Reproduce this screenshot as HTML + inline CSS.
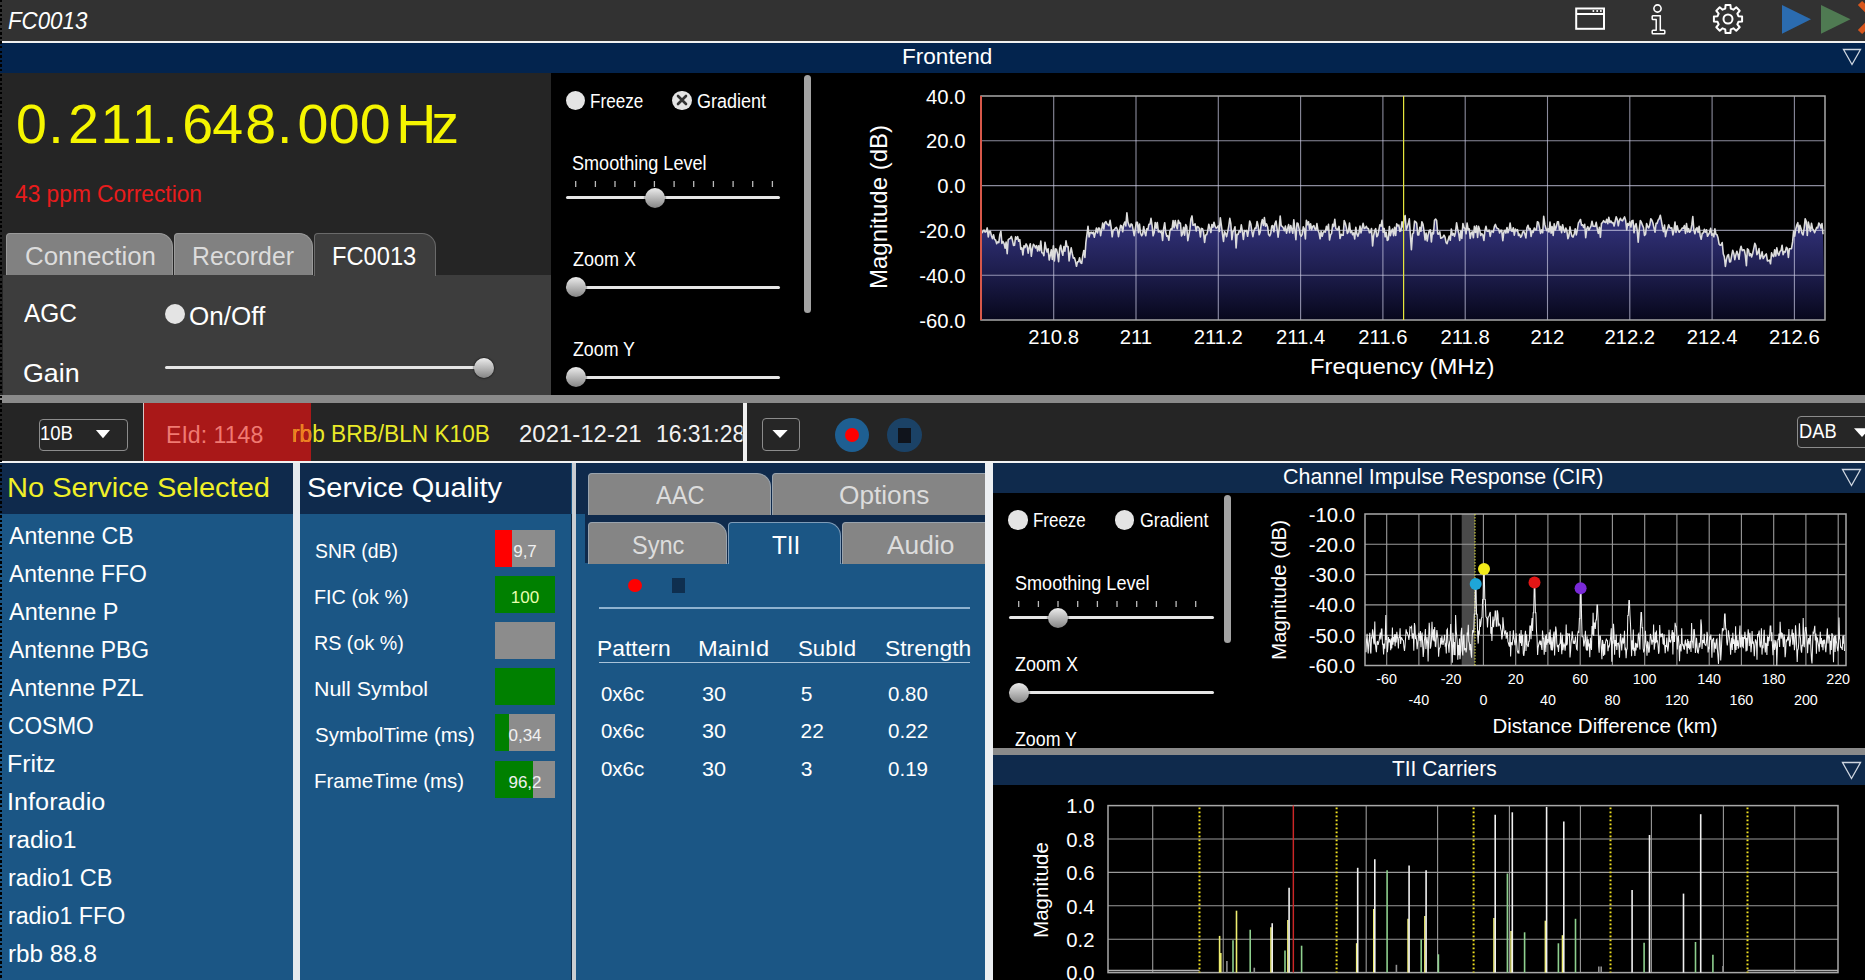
<!DOCTYPE html>
<html><head><meta charset="utf-8"><style>
html,body{margin:0;padding:0;width:1865px;height:980px;overflow:hidden;background:#000;}
body{position:relative;font-family:"Liberation Sans",sans-serif;}
.r{position:absolute;}
.t{position:absolute;white-space:nowrap;transform-origin:0 0;}
</style></head><body>
<div class="r" style="left:0px;top:0px;width:1865px;height:41px;background:#323232;"></div>
<div class="t" style="left:7.66px;top:8.88px;font-size:24px;line-height:24px;color:#fff;transform:scaleX(0.9286);font-style:italic;">FC0013</div>
<div class="r" style="left:0px;top:41px;width:1865px;height:2px;background:#f0f0f0;"></div>
<svg class="r" style="left:1560px;top:0px" width="305" height="41" viewBox="1560 0 305 41">
<rect x="1576.2" y="8.5" width="27.8" height="20.3" fill="none" stroke="#fff" stroke-width="2"/>
<line x1="1576" y1="14" x2="1604" y2="14" stroke="#fff" stroke-width="2"/>
<circle cx="1593.4" cy="11" r="1" fill="#fff"/><circle cx="1597.2" cy="11" r="1" fill="#fff"/><circle cx="1600.9" cy="11" r="1" fill="#fff"/>
<circle cx="1657.5" cy="8.5" r="3.6" fill="none" stroke="#fff" stroke-width="1.6"/>
<path d="M1652.8,15.8 H1660.3 V30.2 H1664 Q1664.8,30.2 1664.8,31 V33 Q1664.8,33.8 1664,33.8 H1653 Q1652.2,33.8 1652.2,33 V31 Q1652.2,30.2 1653,30.2 H1656.2 V19.6 H1653 Q1652.2,19.6 1652.2,18.8 V16.6 Q1652.2,15.8 1652.8,15.8 Z" fill="none" stroke="#fff" stroke-width="1.5" stroke-linejoin="round"/>
<polygon points="1738.44,16.22 1742.09,16.58 1742.09,21.42 1738.44,21.78 1737.34,24.42 1739.68,27.26 1736.26,30.68 1733.42,28.34 1730.78,29.44 1730.42,33.09 1725.58,33.09 1725.22,29.44 1722.58,28.34 1719.74,30.68 1716.32,27.26 1718.66,24.42 1717.56,21.78 1713.91,21.42 1713.91,16.58 1717.56,16.22 1718.66,13.58 1716.32,10.74 1719.74,7.32 1722.58,9.66 1725.22,8.56 1725.58,4.91 1730.42,4.91 1730.78,8.56 1733.42,9.66 1736.26,7.32 1739.68,10.74 1737.34,13.58" fill="none" stroke="#fff" stroke-width="2" stroke-linejoin="round"/><circle cx="1728" cy="19" r="4.5" fill="none" stroke="#fff" stroke-width="2"/>
<polygon points="1782,5 1811,19.3 1782,33.7" fill="#2b6cb0"/>
<polygon points="1821,5 1850.5,19.3 1821,33.7" fill="#4f7a52"/>
<path d="M1860 3 l8 8 M1860 32 l8 -8" stroke="#d8561c" stroke-width="6"/>
</svg>
<div class="r" style="left:0px;top:43px;width:1865px;height:30px;background:#03244e;"></div>
<div class="t" style="left:901.86px;top:46.48px;font-size:22px;line-height:22px;color:#fff;transform:scaleX(1.0252);">Frontend</div>
<svg class="r" style="left:1840px;top:46px" width="24" height="22"><polygon points="3.5,3.5 20.5,3.5 12,18.5" fill="none" stroke="#cfd6e0" stroke-width="1.3"/></svg>
<div class="r" style="left:0px;top:73px;width:1865px;height:322px;background:#000;"></div>
<div class="r" style="left:0px;top:73px;width:551px;height:322px;background:#252525;"></div>
<div class="t" style="left:15.88px;top:96.82px;font-size:55.5px;line-height:55.5px;color:#f5f500;">0</div>
<div class="t" style="left:48.30px;top:96.82px;font-size:55.5px;line-height:55.5px;color:#f5f500;">.</div>
<div class="t" style="left:68.12px;top:96.82px;font-size:55.5px;line-height:55.5px;color:#f5f500;">2</div>
<div class="t" style="left:100.54px;top:96.82px;font-size:55.5px;line-height:55.5px;color:#f5f500;">1</div>
<div class="t" style="left:131.64px;top:96.82px;font-size:55.5px;line-height:55.5px;color:#f5f500;">1</div>
<div class="t" style="left:162.31px;top:96.82px;font-size:55.5px;line-height:55.5px;color:#f5f500;">.</div>
<div class="t" style="left:182.22px;top:96.82px;font-size:55.5px;line-height:55.5px;color:#f5f500;">6</div>
<div class="t" style="left:212.15px;top:96.82px;font-size:55.5px;line-height:55.5px;color:#f5f500;">4</div>
<div class="t" style="left:245.34px;top:96.82px;font-size:55.5px;line-height:55.5px;color:#f5f500;">8</div>
<div class="t" style="left:276.90px;top:96.82px;font-size:55.5px;line-height:55.5px;color:#f5f500;">.</div>
<div class="t" style="left:297.58px;top:96.82px;font-size:55.5px;line-height:55.5px;color:#f5f500;">0</div>
<div class="t" style="left:328.68px;top:96.82px;font-size:55.5px;line-height:55.5px;color:#f5f500;">0</div>
<div class="t" style="left:359.78px;top:96.82px;font-size:55.5px;line-height:55.5px;color:#f5f500;">0</div>
<div class="t" style="left:396.22px;top:96.82px;font-size:55.5px;line-height:55.5px;color:#f5f500;">H</div>
<div class="t" style="left:431.28px;top:96.82px;font-size:55.5px;line-height:55.5px;color:#f5f500;">z</div>
<div class="t" style="left:15.49px;top:181.98px;font-size:24px;line-height:24px;color:#e81c1c;transform:scaleX(0.9470);">43 ppm Correction</div>
<div class="r" style="left:3px;top:275px;width:548px;height:120px;background:#3d3d3d;"></div>
<div class="r" style="left:6px;top:233px;width:166.5px;height:42px;background:#818181;border-radius:4px 14px 0 0;border:1px solid #9a9a9a;border-bottom:none;box-sizing:border-box;"></div>
<div class="r" style="left:174.2px;top:233px;width:139.0px;height:42px;background:#818181;border-radius:4px 14px 0 0;border:1px solid #9a9a9a;border-bottom:none;box-sizing:border-box;"></div>
<div class="r" style="left:314.4px;top:233px;width:121.20000000000005px;height:43px;background:#3d3d3d;border-radius:4px 14px 0 0;border:1px solid #6a6a6a;border-bottom:none;box-sizing:border-box;"></div>
<div class="t" style="left:24.51px;top:243.61px;font-size:25.5px;line-height:25.5px;color:#dcdcdc;transform:scaleX(1.0151);">Connection</div>
<div class="t" style="left:192.46px;top:243.61px;font-size:25.5px;line-height:25.5px;color:#dcdcdc;transform:scaleX(0.9718);">Recorder</div>
<div class="t" style="left:331.75px;top:243.61px;font-size:25.5px;line-height:25.5px;color:#fff;transform:scaleX(0.9288);">FC0013</div>
<div class="t" style="left:24.04px;top:301.01px;font-size:25.5px;line-height:25.5px;color:#fff;transform:scaleX(0.9585);">AGC</div>
<div class="r" style="left:165px;top:304px;width:20px;height:20px;border-radius:50%;background:#e4e4e4"></div>
<div class="t" style="left:189.36px;top:303.51px;font-size:25.5px;line-height:25.5px;color:#fff;transform:scaleX(1.0204);">On/Off</div>
<div class="t" style="left:22.76px;top:360.71px;font-size:25.5px;line-height:25.5px;color:#fff;transform:scaleX(1.0523);">Gain</div>
<div class="r" style="left:165px;top:366px;width:320px;height:3px;background:#e6e6e6;border-radius:2px;"></div>
<div class="r" style="left:474.0px;top:357.5px;width:20px;height:20px;border-radius:50%;background:linear-gradient(180deg,#ececec 0%,#b8b8b8 50%,#858585 100%);box-shadow:0 0 1.5px 0.5px rgba(0,0,0,0.6);"></div>
<div class="r" style="left:565.75px;top:90.65px;width:19.5px;height:19.5px;border-radius:50%;background:#e4e4e4"></div>
<div class="t" style="left:589.89px;top:90.97px;font-size:20px;line-height:20px;color:#fff;transform:scaleX(0.8543);">Freeze</div>
<div class="r" style="left:672.25px;top:90.65px;width:19.5px;height:19.5px;border-radius:50%;background:#e4e4e4"></div>
<svg class="r" style="left:672px;top:90.4px" width="20" height="20"><path d="M6 6 L14 14 M14 6 L6 14" stroke="#333" stroke-width="2.6" stroke-linecap="round"/></svg>
<div class="t" style="left:697.30px;top:90.97px;font-size:20px;line-height:20px;color:#fff;transform:scaleX(0.9001);">Gradient</div>
<div class="t" style="left:572.49px;top:152.77px;font-size:20px;line-height:20px;color:#fff;transform:scaleX(0.9029);">Smoothing Level</div>
<svg class="r" style="left:0;top:0" width="1865" height="980"><line x1="575.7" y1="181" x2="575.7" y2="187" stroke="#bbb" stroke-width="1.3"/><line x1="595.4" y1="181" x2="595.4" y2="187" stroke="#bbb" stroke-width="1.3"/><line x1="615.0" y1="181" x2="615.0" y2="187" stroke="#bbb" stroke-width="1.3"/><line x1="634.7" y1="181" x2="634.7" y2="187" stroke="#bbb" stroke-width="1.3"/><line x1="654.4" y1="181" x2="654.4" y2="187" stroke="#bbb" stroke-width="1.3"/><line x1="674.1" y1="181" x2="674.1" y2="187" stroke="#bbb" stroke-width="1.3"/><line x1="693.7" y1="181" x2="693.7" y2="187" stroke="#bbb" stroke-width="1.3"/><line x1="713.4" y1="181" x2="713.4" y2="187" stroke="#bbb" stroke-width="1.3"/><line x1="733.1" y1="181" x2="733.1" y2="187" stroke="#bbb" stroke-width="1.3"/><line x1="752.7" y1="181" x2="752.7" y2="187" stroke="#bbb" stroke-width="1.3"/><line x1="772.4" y1="181" x2="772.4" y2="187" stroke="#bbb" stroke-width="1.3"/></svg>
<div class="r" style="left:566px;top:196px;width:213.5px;height:3px;background:#e6e6e6;border-radius:2px;"></div>
<div class="r" style="left:644.5px;top:188.2px;width:20px;height:20px;border-radius:50%;background:linear-gradient(180deg,#ececec 0%,#b8b8b8 50%,#858585 100%);box-shadow:0 0 1.5px 0.5px rgba(0,0,0,0.6);"></div>
<div class="t" style="left:572.72px;top:248.77px;font-size:20px;line-height:20px;color:#fff;transform:scaleX(0.8992);">Zoom X</div>
<div class="r" style="left:566px;top:286px;width:213.5px;height:3px;background:#e6e6e6;border-radius:2px;"></div>
<div class="r" style="left:566.0px;top:277.2px;width:20px;height:20px;border-radius:50%;background:linear-gradient(180deg,#ececec 0%,#b8b8b8 50%,#858585 100%);box-shadow:0 0 1.5px 0.5px rgba(0,0,0,0.6);"></div>
<div class="t" style="left:572.72px;top:338.97px;font-size:20px;line-height:20px;color:#fff;transform:scaleX(0.8899);">Zoom Y</div>
<div class="r" style="left:566px;top:375.5px;width:213.5px;height:3px;background:#e6e6e6;border-radius:2px;"></div>
<div class="r" style="left:566.0px;top:366.7px;width:20px;height:20px;border-radius:50%;background:linear-gradient(180deg,#ececec 0%,#b8b8b8 50%,#858585 100%);box-shadow:0 0 1.5px 0.5px rgba(0,0,0,0.6);"></div>
<div class="r" style="left:803.6px;top:74.6px;width:7.6px;height:238px;background:#a3a3a3;border-radius:4px;"></div>
<svg class="r" style="left:0;top:0" width="1865" height="980"><defs><linearGradient id="sg" x1="0" y1="96" x2="0" y2="320" gradientUnits="userSpaceOnUse"><stop offset="0" stop-color="#3a3ab0"/><stop offset="0.6" stop-color="#2e2e72"/><stop offset="0.8" stop-color="#1c1c4a"/><stop offset="1" stop-color="#07071c"/></linearGradient></defs><path d="M981,320 L982.0,233.2 L983.0,231.1 L984.1,230.2 L985.1,232.2 L986.2,231.5 L987.2,227.9 L988.3,236.9 L989.3,231.5 L990.4,231.4 L991.4,235.8 L992.5,238.6 L993.5,234.7 L994.6,239.6 L995.6,240.0 L996.7,243.7 L997.7,241.9 L998.8,242.6 L999.8,234.8 L1000.9,231.3 L1001.9,243.4 L1003.0,241.5 L1004.0,243.4 L1005.1,248.1 L1006.1,242.1 L1007.2,253.6 L1008.2,239.8 L1009.3,238.7 L1010.3,238.4 L1011.4,236.5 L1012.4,240.1 L1013.5,245.4 L1014.5,245.3 L1015.6,236.9 L1016.6,239.1 L1017.7,236.7 L1018.7,241.3 L1019.8,239.6 L1020.8,249.2 L1021.9,247.8 L1022.9,255.0 L1024.0,245.7 L1025.0,247.6 L1026.1,243.9 L1027.1,245.8 L1028.2,253.1 L1029.2,247.4 L1030.3,243.8 L1031.3,256.3 L1032.4,248.6 L1033.4,244.4 L1034.5,245.5 L1035.5,248.0 L1036.6,245.7 L1037.6,251.0 L1038.7,245.9 L1039.7,250.7 L1040.8,241.0 L1041.8,252.8 L1042.9,253.0 L1043.9,255.6 L1045.0,242.3 L1046.0,248.1 L1047.1,252.0 L1048.1,248.8 L1049.2,260.0 L1050.2,255.9 L1051.3,249.9 L1052.3,259.4 L1053.4,245.7 L1054.4,260.9 L1055.5,248.9 L1056.5,249.2 L1057.6,254.4 L1058.6,261.6 L1059.7,248.4 L1060.7,245.3 L1061.8,251.5 L1062.8,255.3 L1063.9,246.6 L1064.9,251.2 L1066.0,240.9 L1067.0,246.6 L1068.1,246.6 L1069.1,260.9 L1070.2,253.1 L1071.2,247.8 L1072.3,253.7 L1073.3,258.1 L1074.4,257.7 L1075.4,261.1 L1076.5,266.3 L1077.5,261.8 L1078.6,261.8 L1079.6,257.8 L1080.7,262.9 L1081.7,263.4 L1082.8,255.4 L1083.8,250.5 L1084.9,257.4 L1085.9,242.4 L1087.0,234.1 L1088.0,226.4 L1089.1,236.9 L1090.1,232.8 L1091.2,232.2 L1092.2,233.6 L1093.3,232.2 L1094.3,237.2 L1095.4,232.5 L1096.4,228.1 L1097.5,232.9 L1098.5,228.1 L1099.6,228.2 L1100.6,235.6 L1101.7,229.3 L1102.7,223.1 L1103.8,229.0 L1104.8,222.7 L1105.9,221.6 L1106.9,223.9 L1108.0,224.7 L1109.0,225.6 L1110.1,220.4 L1111.1,227.2 L1112.2,236.8 L1113.2,230.0 L1114.3,229.8 L1115.3,228.2 L1116.4,227.3 L1117.4,229.5 L1118.5,236.7 L1119.5,230.9 L1120.6,225.4 L1121.6,226.0 L1122.7,231.8 L1123.7,224.8 L1124.8,222.1 L1125.8,225.9 L1126.9,212.8 L1127.9,222.0 L1129.0,225.3 L1130.0,227.0 L1131.1,223.9 L1132.1,224.6 L1133.2,230.2 L1134.2,235.7 L1135.3,228.8 L1136.3,222.3 L1137.4,222.4 L1138.4,232.7 L1139.5,224.1 L1140.5,233.0 L1141.6,235.7 L1142.6,234.3 L1143.7,226.6 L1144.7,232.6 L1145.8,235.7 L1146.8,228.7 L1147.9,229.5 L1148.9,224.3 L1150.0,224.2 L1151.0,218.4 L1152.1,225.8 L1153.1,235.8 L1154.2,232.5 L1155.2,222.5 L1156.3,228.2 L1157.3,222.5 L1158.4,232.0 L1159.4,230.9 L1160.5,232.5 L1161.5,231.2 L1162.6,240.4 L1163.6,228.8 L1164.7,222.7 L1165.7,232.2 L1166.8,236.2 L1167.8,235.8 L1168.9,240.2 L1169.9,231.2 L1171.0,228.9 L1172.0,229.2 L1173.1,220.5 L1174.1,227.8 L1175.2,220.5 L1176.2,225.4 L1177.3,228.8 L1178.3,220.3 L1179.4,223.1 L1180.4,223.0 L1181.5,236.0 L1182.5,233.8 L1183.6,227.2 L1184.6,235.2 L1185.7,224.6 L1186.7,226.5 L1187.8,240.7 L1188.8,235.3 L1189.9,229.4 L1190.9,219.0 L1192.0,215.9 L1193.0,225.3 L1194.1,225.0 L1195.1,223.9 L1196.2,231.0 L1197.2,226.6 L1198.3,227.0 L1199.3,228.4 L1200.4,237.0 L1201.4,228.4 L1202.5,228.7 L1203.5,232.2 L1204.6,242.5 L1205.6,235.1 L1206.7,234.8 L1207.7,231.1 L1208.8,224.2 L1209.8,228.4 L1210.9,232.5 L1211.9,224.5 L1213.0,227.2 L1214.0,222.2 L1215.1,226.5 L1216.1,228.2 L1217.2,227.4 L1218.2,225.8 L1219.3,231.5 L1220.3,217.7 L1221.4,225.5 L1222.4,233.3 L1223.5,241.4 L1224.5,231.6 L1225.6,233.6 L1226.6,236.7 L1227.7,231.6 L1228.7,226.5 L1229.8,218.3 L1230.8,223.7 L1231.9,239.6 L1232.9,231.8 L1234.0,230.1 L1235.0,226.7 L1236.1,247.9 L1237.1,234.3 L1238.2,234.4 L1239.2,230.7 L1240.3,232.1 L1241.3,224.9 L1242.4,231.6 L1243.4,239.4 L1244.5,230.6 L1245.5,231.2 L1246.6,230.5 L1247.6,236.3 L1248.7,229.9 L1249.7,221.1 L1250.8,224.1 L1251.8,231.1 L1252.9,236.7 L1253.9,231.3 L1255.0,228.1 L1256.0,228.4 L1257.1,221.5 L1258.1,225.6 L1259.2,234.8 L1260.2,232.0 L1261.3,223.8 L1262.3,219.6 L1263.4,225.4 L1264.4,217.5 L1265.5,226.1 L1266.5,223.9 L1267.6,226.7 L1268.6,234.6 L1269.7,235.9 L1270.7,233.7 L1271.8,225.9 L1272.8,225.5 L1273.9,231.8 L1274.9,223.8 L1276.0,221.0 L1277.0,228.3 L1278.1,237.2 L1279.1,229.6 L1280.2,216.0 L1281.2,225.8 L1282.3,226.5 L1283.3,227.9 L1284.4,230.7 L1285.4,226.1 L1286.5,233.2 L1287.5,229.1 L1288.6,224.6 L1289.6,232.7 L1290.7,225.5 L1291.7,228.9 L1292.8,233.2 L1293.8,219.9 L1294.9,230.0 L1295.9,239.6 L1297.0,223.1 L1298.0,223.5 L1299.1,228.9 L1300.1,234.6 L1301.2,236.2 L1302.2,234.3 L1303.3,226.9 L1304.3,228.8 L1305.4,239.0 L1306.4,220.3 L1307.5,224.8 L1308.5,221.7 L1309.6,229.2 L1310.6,223.8 L1311.7,229.6 L1312.7,226.5 L1313.8,225.6 L1314.8,228.7 L1315.9,230.0 L1316.9,223.6 L1318.0,230.4 L1319.0,232.7 L1320.1,238.8 L1321.1,231.3 L1322.2,236.3 L1323.2,232.6 L1324.3,231.4 L1325.3,232.1 L1326.4,226.4 L1327.4,229.7 L1328.5,224.4 L1329.5,240.0 L1330.6,234.9 L1331.6,233.3 L1332.7,224.2 L1333.7,226.5 L1334.8,219.3 L1335.8,228.5 L1336.9,229.4 L1337.9,229.6 L1339.0,226.4 L1340.0,238.5 L1341.1,234.2 L1342.1,235.1 L1343.2,235.3 L1344.2,220.5 L1345.3,223.3 L1346.3,227.4 L1347.4,233.5 L1348.4,231.6 L1349.5,223.0 L1350.5,232.7 L1351.6,230.8 L1352.6,234.7 L1353.7,232.9 L1354.7,238.9 L1355.8,227.2 L1356.8,233.6 L1357.9,236.3 L1358.9,233.3 L1360.0,226.1 L1361.0,232.9 L1362.1,227.8 L1363.1,223.3 L1364.2,228.5 L1365.2,228.1 L1366.3,226.3 L1367.3,228.4 L1368.4,228.6 L1369.4,232.7 L1370.5,232.4 L1371.5,228.5 L1372.6,246.0 L1373.6,235.8 L1374.7,230.5 L1375.7,228.6 L1376.8,236.7 L1377.8,235.3 L1378.9,230.0 L1379.9,224.7 L1381.0,226.1 L1382.0,220.3 L1383.1,232.3 L1384.1,228.4 L1385.2,236.8 L1386.2,232.4 L1387.3,240.5 L1388.3,239.7 L1389.4,226.5 L1390.4,235.6 L1391.5,231.0 L1392.5,229.0 L1393.6,235.6 L1394.6,227.4 L1395.7,235.4 L1396.7,223.8 L1397.8,225.8 L1398.8,225.0 L1399.9,231.4 L1400.9,230.9 L1402.0,221.7 L1403.0,227.0 L1404.1,218.3 L1405.1,215.5 L1406.2,229.7 L1407.2,226.9 L1408.3,223.6 L1409.3,218.8 L1410.4,235.1 L1411.4,249.8 L1412.5,234.1 L1413.5,232.9 L1414.6,221.1 L1415.6,221.7 L1416.7,223.3 L1417.7,235.0 L1418.8,234.9 L1419.8,227.4 L1420.9,231.3 L1421.9,221.7 L1423.0,224.3 L1424.0,230.9 L1425.1,240.0 L1426.1,233.0 L1427.2,241.0 L1428.2,234.7 L1429.3,230.4 L1430.3,229.9 L1431.4,241.9 L1432.4,232.2 L1433.5,233.8 L1434.5,220.2 L1435.6,219.1 L1436.6,220.4 L1437.7,234.0 L1438.7,234.2 L1439.8,231.8 L1440.8,238.3 L1441.9,237.7 L1442.9,237.2 L1444.0,235.2 L1445.0,237.1 L1446.1,242.6 L1447.1,243.6 L1448.2,239.6 L1449.2,236.1 L1450.3,240.2 L1451.3,229.0 L1452.4,235.2 L1453.4,233.5 L1454.5,236.3 L1455.5,232.2 L1456.6,222.9 L1457.6,228.7 L1458.7,233.5 L1459.7,240.4 L1460.8,231.1 L1461.8,238.5 L1462.9,223.5 L1463.9,227.5 L1465.0,228.3 L1466.0,233.8 L1467.1,223.0 L1468.1,229.4 L1469.2,228.8 L1470.2,238.4 L1471.3,232.8 L1472.3,231.9 L1473.4,237.8 L1474.4,226.4 L1475.5,232.4 L1476.5,225.8 L1477.6,237.4 L1478.6,226.4 L1479.7,230.0 L1480.7,235.5 L1481.8,233.7 L1482.8,234.8 L1483.9,240.4 L1484.9,231.0 L1486.0,226.3 L1487.0,231.1 L1488.1,231.2 L1489.1,230.1 L1490.2,236.4 L1491.2,231.4 L1492.3,231.4 L1493.3,232.3 L1494.4,226.3 L1495.4,224.4 L1496.5,227.5 L1497.5,228.6 L1498.6,228.9 L1499.6,233.0 L1500.7,230.3 L1501.7,230.4 L1502.8,240.7 L1503.8,232.1 L1504.9,230.3 L1505.9,233.1 L1507.0,227.5 L1508.0,232.8 L1509.1,229.5 L1510.1,223.1 L1511.2,230.7 L1512.2,231.3 L1513.3,227.7 L1514.3,235.1 L1515.4,229.1 L1516.4,230.8 L1517.5,229.7 L1518.5,235.5 L1519.6,234.2 L1520.6,237.3 L1521.7,235.7 L1522.7,232.1 L1523.8,231.2 L1524.8,233.9 L1525.9,237.9 L1526.9,227.8 L1528.0,225.3 L1529.0,229.2 L1530.1,228.5 L1531.1,236.4 L1532.2,231.1 L1533.2,232.3 L1534.3,228.0 L1535.3,229.8 L1536.4,229.8 L1537.4,221.7 L1538.5,222.7 L1539.5,227.8 L1540.6,233.4 L1541.6,229.9 L1542.7,232.7 L1543.7,216.4 L1544.8,224.4 L1545.8,228.2 L1546.9,230.6 L1547.9,228.8 L1549.0,232.0 L1550.0,222.1 L1551.1,233.1 L1552.1,226.6 L1553.2,235.4 L1554.2,223.9 L1555.3,230.0 L1556.3,227.0 L1557.4,221.9 L1558.4,221.7 L1559.5,229.8 L1560.5,226.4 L1561.6,232.6 L1562.6,224.7 L1563.7,229.4 L1564.7,232.2 L1565.8,228.1 L1566.8,230.3 L1567.9,238.7 L1568.9,235.9 L1570.0,226.8 L1571.0,232.8 L1572.1,236.4 L1573.1,237.1 L1574.2,234.0 L1575.2,228.8 L1576.3,234.9 L1577.3,230.0 L1578.4,223.0 L1579.4,221.4 L1580.5,219.5 L1581.5,225.2 L1582.6,224.8 L1583.6,227.5 L1584.7,224.3 L1585.7,237.6 L1586.8,228.9 L1587.8,226.7 L1588.9,230.1 L1589.9,228.2 L1591.0,226.2 L1592.0,221.2 L1593.1,226.3 L1594.1,226.2 L1595.2,226.4 L1596.2,222.4 L1597.3,229.1 L1598.3,233.4 L1599.4,227.4 L1600.4,237.3 L1601.5,223.4 L1602.5,222.6 L1603.6,220.7 L1604.6,222.0 L1605.7,222.6 L1606.7,219.2 L1607.8,223.6 L1608.8,217.4 L1609.9,222.5 L1610.9,221.0 L1612.0,222.9 L1613.0,222.6 L1614.1,226.1 L1615.1,221.5 L1616.2,216.8 L1617.2,219.2 L1618.3,225.8 L1619.3,220.6 L1620.4,218.3 L1621.4,220.3 L1622.5,220.9 L1623.5,218.8 L1624.6,216.9 L1625.6,220.2 L1626.7,229.8 L1627.7,223.6 L1628.8,225.2 L1629.8,221.8 L1630.9,227.0 L1631.9,220.8 L1633.0,220.4 L1634.0,232.8 L1635.1,225.9 L1636.1,223.7 L1637.2,230.5 L1638.2,242.3 L1639.3,229.4 L1640.3,220.5 L1641.4,222.2 L1642.4,225.2 L1643.5,227.6 L1644.5,235.5 L1645.6,234.1 L1646.6,223.5 L1647.7,226.7 L1648.7,227.9 L1649.8,224.9 L1650.8,218.7 L1651.9,220.2 L1652.9,223.0 L1654.0,228.1 L1655.0,232.1 L1656.1,223.4 L1657.1,223.4 L1658.2,220.1 L1659.2,218.8 L1660.3,215.2 L1661.3,220.4 L1662.4,226.9 L1663.4,231.6 L1664.5,225.1 L1665.5,236.6 L1666.6,231.1 L1667.6,228.8 L1668.7,224.8 L1669.7,227.6 L1670.8,228.2 L1671.8,227.8 L1672.9,234.9 L1673.9,230.5 L1675.0,222.0 L1676.0,232.4 L1677.1,225.7 L1678.1,229.8 L1679.2,232.2 L1680.2,230.8 L1681.3,229.7 L1682.3,228.0 L1683.4,228.1 L1684.4,225.5 L1685.5,233.5 L1686.5,223.6 L1687.6,231.9 L1688.6,228.5 L1689.7,232.3 L1690.7,230.8 L1691.8,224.9 L1692.8,216.5 L1693.9,230.3 L1694.9,233.7 L1696.0,228.8 L1697.0,227.7 L1698.1,232.4 L1699.1,226.3 L1700.2,235.7 L1701.2,239.2 L1702.3,233.2 L1703.3,232.9 L1704.4,229.2 L1705.4,232.2 L1706.5,229.8 L1707.5,236.3 L1708.6,234.4 L1709.6,232.3 L1710.7,228.3 L1711.7,235.2 L1712.8,233.8 L1713.8,236.8 L1714.9,228.9 L1715.9,234.2 L1717.0,234.8 L1718.0,237.8 L1719.1,244.2 L1720.1,245.1 L1721.2,244.9 L1722.2,242.5 L1723.3,254.0 L1724.3,256.6 L1725.4,266.4 L1726.4,259.6 L1727.5,255.5 L1728.5,254.5 L1729.6,262.0 L1730.6,261.7 L1731.7,255.5 L1732.7,250.3 L1733.8,253.4 L1734.8,259.7 L1735.9,254.7 L1736.9,251.2 L1738.0,254.6 L1739.0,259.3 L1740.1,249.8 L1741.1,246.3 L1742.2,250.6 L1743.2,249.8 L1744.3,250.0 L1745.3,255.2 L1746.4,265.7 L1747.4,248.9 L1748.5,249.8 L1749.5,255.6 L1750.6,253.6 L1751.6,257.0 L1752.7,253.4 L1753.7,248.8 L1754.8,243.3 L1755.8,245.5 L1756.9,254.6 L1757.9,252.9 L1759.0,248.6 L1760.0,259.0 L1761.1,256.1 L1762.1,251.9 L1763.2,258.5 L1764.2,256.9 L1765.3,255.1 L1766.3,253.9 L1767.4,260.9 L1768.4,260.7 L1769.5,260.1 L1770.5,263.8 L1771.6,252.9 L1772.6,255.7 L1773.7,256.6 L1774.7,249.7 L1775.8,256.0 L1776.8,247.8 L1777.9,253.6 L1778.9,255.4 L1780.0,251.4 L1781.0,250.6 L1782.1,245.2 L1783.1,254.6 L1784.2,251.6 L1785.2,252.1 L1786.3,247.4 L1787.3,248.3 L1788.4,257.5 L1789.4,248.7 L1790.5,248.8 L1791.5,248.7 L1792.6,241.9 L1793.6,231.1 L1794.7,236.1 L1795.7,229.5 L1796.8,225.0 L1797.8,222.7 L1798.9,232.6 L1799.9,225.3 L1801.0,228.5 L1802.0,233.3 L1803.1,235.0 L1804.1,228.5 L1805.2,218.7 L1806.2,221.4 L1807.3,235.5 L1808.3,222.0 L1809.4,227.2 L1810.4,231.5 L1811.5,223.4 L1812.5,228.7 L1813.6,230.2 L1814.6,232.7 L1815.7,230.0 L1816.7,227.4 L1817.8,227.9 L1818.8,223.0 L1819.9,224.6 L1820.9,228.0 L1822.0,223.5 L1823.0,234.3 L1825,320 Z" fill="url(#sg)"/><g stroke="rgba(205,205,230,0.68)" stroke-width="1.1"><line x1="1053.7" y1="96" x2="1053.7" y2="320"/><line x1="1136.0" y1="96" x2="1136.0" y2="320"/><line x1="1218.3" y1="96" x2="1218.3" y2="320"/><line x1="1300.6" y1="96" x2="1300.6" y2="320"/><line x1="1382.9" y1="96" x2="1382.9" y2="320"/><line x1="1465.2" y1="96" x2="1465.2" y2="320"/><line x1="1547.5" y1="96" x2="1547.5" y2="320"/><line x1="1629.8" y1="96" x2="1629.8" y2="320"/><line x1="1712.1" y1="96" x2="1712.1" y2="320"/><line x1="1794.4" y1="96" x2="1794.4" y2="320"/><line x1="981" y1="140.8" x2="1825" y2="140.8"/><line x1="981" y1="185.6" x2="1825" y2="185.6"/><line x1="981" y1="230.4" x2="1825" y2="230.4"/><line x1="981" y1="275.2" x2="1825" y2="275.2"/></g><rect x="981" y="96" width="844" height="224" fill="none" stroke="#a8a8a8" stroke-width="1.5"/><polyline points="982.0,233.2 983.0,231.1 984.1,230.2 985.1,232.2 986.2,231.5 987.2,227.9 988.3,236.9 989.3,231.5 990.4,231.4 991.4,235.8 992.5,238.6 993.5,234.7 994.6,239.6 995.6,240.0 996.7,243.7 997.7,241.9 998.8,242.6 999.8,234.8 1000.9,231.3 1001.9,243.4 1003.0,241.5 1004.0,243.4 1005.1,248.1 1006.1,242.1 1007.2,253.6 1008.2,239.8 1009.3,238.7 1010.3,238.4 1011.4,236.5 1012.4,240.1 1013.5,245.4 1014.5,245.3 1015.6,236.9 1016.6,239.1 1017.7,236.7 1018.7,241.3 1019.8,239.6 1020.8,249.2 1021.9,247.8 1022.9,255.0 1024.0,245.7 1025.0,247.6 1026.1,243.9 1027.1,245.8 1028.2,253.1 1029.2,247.4 1030.3,243.8 1031.3,256.3 1032.4,248.6 1033.4,244.4 1034.5,245.5 1035.5,248.0 1036.6,245.7 1037.6,251.0 1038.7,245.9 1039.7,250.7 1040.8,241.0 1041.8,252.8 1042.9,253.0 1043.9,255.6 1045.0,242.3 1046.0,248.1 1047.1,252.0 1048.1,248.8 1049.2,260.0 1050.2,255.9 1051.3,249.9 1052.3,259.4 1053.4,245.7 1054.4,260.9 1055.5,248.9 1056.5,249.2 1057.6,254.4 1058.6,261.6 1059.7,248.4 1060.7,245.3 1061.8,251.5 1062.8,255.3 1063.9,246.6 1064.9,251.2 1066.0,240.9 1067.0,246.6 1068.1,246.6 1069.1,260.9 1070.2,253.1 1071.2,247.8 1072.3,253.7 1073.3,258.1 1074.4,257.7 1075.4,261.1 1076.5,266.3 1077.5,261.8 1078.6,261.8 1079.6,257.8 1080.7,262.9 1081.7,263.4 1082.8,255.4 1083.8,250.5 1084.9,257.4 1085.9,242.4 1087.0,234.1 1088.0,226.4 1089.1,236.9 1090.1,232.8 1091.2,232.2 1092.2,233.6 1093.3,232.2 1094.3,237.2 1095.4,232.5 1096.4,228.1 1097.5,232.9 1098.5,228.1 1099.6,228.2 1100.6,235.6 1101.7,229.3 1102.7,223.1 1103.8,229.0 1104.8,222.7 1105.9,221.6 1106.9,223.9 1108.0,224.7 1109.0,225.6 1110.1,220.4 1111.1,227.2 1112.2,236.8 1113.2,230.0 1114.3,229.8 1115.3,228.2 1116.4,227.3 1117.4,229.5 1118.5,236.7 1119.5,230.9 1120.6,225.4 1121.6,226.0 1122.7,231.8 1123.7,224.8 1124.8,222.1 1125.8,225.9 1126.9,212.8 1127.9,222.0 1129.0,225.3 1130.0,227.0 1131.1,223.9 1132.1,224.6 1133.2,230.2 1134.2,235.7 1135.3,228.8 1136.3,222.3 1137.4,222.4 1138.4,232.7 1139.5,224.1 1140.5,233.0 1141.6,235.7 1142.6,234.3 1143.7,226.6 1144.7,232.6 1145.8,235.7 1146.8,228.7 1147.9,229.5 1148.9,224.3 1150.0,224.2 1151.0,218.4 1152.1,225.8 1153.1,235.8 1154.2,232.5 1155.2,222.5 1156.3,228.2 1157.3,222.5 1158.4,232.0 1159.4,230.9 1160.5,232.5 1161.5,231.2 1162.6,240.4 1163.6,228.8 1164.7,222.7 1165.7,232.2 1166.8,236.2 1167.8,235.8 1168.9,240.2 1169.9,231.2 1171.0,228.9 1172.0,229.2 1173.1,220.5 1174.1,227.8 1175.2,220.5 1176.2,225.4 1177.3,228.8 1178.3,220.3 1179.4,223.1 1180.4,223.0 1181.5,236.0 1182.5,233.8 1183.6,227.2 1184.6,235.2 1185.7,224.6 1186.7,226.5 1187.8,240.7 1188.8,235.3 1189.9,229.4 1190.9,219.0 1192.0,215.9 1193.0,225.3 1194.1,225.0 1195.1,223.9 1196.2,231.0 1197.2,226.6 1198.3,227.0 1199.3,228.4 1200.4,237.0 1201.4,228.4 1202.5,228.7 1203.5,232.2 1204.6,242.5 1205.6,235.1 1206.7,234.8 1207.7,231.1 1208.8,224.2 1209.8,228.4 1210.9,232.5 1211.9,224.5 1213.0,227.2 1214.0,222.2 1215.1,226.5 1216.1,228.2 1217.2,227.4 1218.2,225.8 1219.3,231.5 1220.3,217.7 1221.4,225.5 1222.4,233.3 1223.5,241.4 1224.5,231.6 1225.6,233.6 1226.6,236.7 1227.7,231.6 1228.7,226.5 1229.8,218.3 1230.8,223.7 1231.9,239.6 1232.9,231.8 1234.0,230.1 1235.0,226.7 1236.1,247.9 1237.1,234.3 1238.2,234.4 1239.2,230.7 1240.3,232.1 1241.3,224.9 1242.4,231.6 1243.4,239.4 1244.5,230.6 1245.5,231.2 1246.6,230.5 1247.6,236.3 1248.7,229.9 1249.7,221.1 1250.8,224.1 1251.8,231.1 1252.9,236.7 1253.9,231.3 1255.0,228.1 1256.0,228.4 1257.1,221.5 1258.1,225.6 1259.2,234.8 1260.2,232.0 1261.3,223.8 1262.3,219.6 1263.4,225.4 1264.4,217.5 1265.5,226.1 1266.5,223.9 1267.6,226.7 1268.6,234.6 1269.7,235.9 1270.7,233.7 1271.8,225.9 1272.8,225.5 1273.9,231.8 1274.9,223.8 1276.0,221.0 1277.0,228.3 1278.1,237.2 1279.1,229.6 1280.2,216.0 1281.2,225.8 1282.3,226.5 1283.3,227.9 1284.4,230.7 1285.4,226.1 1286.5,233.2 1287.5,229.1 1288.6,224.6 1289.6,232.7 1290.7,225.5 1291.7,228.9 1292.8,233.2 1293.8,219.9 1294.9,230.0 1295.9,239.6 1297.0,223.1 1298.0,223.5 1299.1,228.9 1300.1,234.6 1301.2,236.2 1302.2,234.3 1303.3,226.9 1304.3,228.8 1305.4,239.0 1306.4,220.3 1307.5,224.8 1308.5,221.7 1309.6,229.2 1310.6,223.8 1311.7,229.6 1312.7,226.5 1313.8,225.6 1314.8,228.7 1315.9,230.0 1316.9,223.6 1318.0,230.4 1319.0,232.7 1320.1,238.8 1321.1,231.3 1322.2,236.3 1323.2,232.6 1324.3,231.4 1325.3,232.1 1326.4,226.4 1327.4,229.7 1328.5,224.4 1329.5,240.0 1330.6,234.9 1331.6,233.3 1332.7,224.2 1333.7,226.5 1334.8,219.3 1335.8,228.5 1336.9,229.4 1337.9,229.6 1339.0,226.4 1340.0,238.5 1341.1,234.2 1342.1,235.1 1343.2,235.3 1344.2,220.5 1345.3,223.3 1346.3,227.4 1347.4,233.5 1348.4,231.6 1349.5,223.0 1350.5,232.7 1351.6,230.8 1352.6,234.7 1353.7,232.9 1354.7,238.9 1355.8,227.2 1356.8,233.6 1357.9,236.3 1358.9,233.3 1360.0,226.1 1361.0,232.9 1362.1,227.8 1363.1,223.3 1364.2,228.5 1365.2,228.1 1366.3,226.3 1367.3,228.4 1368.4,228.6 1369.4,232.7 1370.5,232.4 1371.5,228.5 1372.6,246.0 1373.6,235.8 1374.7,230.5 1375.7,228.6 1376.8,236.7 1377.8,235.3 1378.9,230.0 1379.9,224.7 1381.0,226.1 1382.0,220.3 1383.1,232.3 1384.1,228.4 1385.2,236.8 1386.2,232.4 1387.3,240.5 1388.3,239.7 1389.4,226.5 1390.4,235.6 1391.5,231.0 1392.5,229.0 1393.6,235.6 1394.6,227.4 1395.7,235.4 1396.7,223.8 1397.8,225.8 1398.8,225.0 1399.9,231.4 1400.9,230.9 1402.0,221.7 1403.0,227.0 1404.1,218.3 1405.1,215.5 1406.2,229.7 1407.2,226.9 1408.3,223.6 1409.3,218.8 1410.4,235.1 1411.4,249.8 1412.5,234.1 1413.5,232.9 1414.6,221.1 1415.6,221.7 1416.7,223.3 1417.7,235.0 1418.8,234.9 1419.8,227.4 1420.9,231.3 1421.9,221.7 1423.0,224.3 1424.0,230.9 1425.1,240.0 1426.1,233.0 1427.2,241.0 1428.2,234.7 1429.3,230.4 1430.3,229.9 1431.4,241.9 1432.4,232.2 1433.5,233.8 1434.5,220.2 1435.6,219.1 1436.6,220.4 1437.7,234.0 1438.7,234.2 1439.8,231.8 1440.8,238.3 1441.9,237.7 1442.9,237.2 1444.0,235.2 1445.0,237.1 1446.1,242.6 1447.1,243.6 1448.2,239.6 1449.2,236.1 1450.3,240.2 1451.3,229.0 1452.4,235.2 1453.4,233.5 1454.5,236.3 1455.5,232.2 1456.6,222.9 1457.6,228.7 1458.7,233.5 1459.7,240.4 1460.8,231.1 1461.8,238.5 1462.9,223.5 1463.9,227.5 1465.0,228.3 1466.0,233.8 1467.1,223.0 1468.1,229.4 1469.2,228.8 1470.2,238.4 1471.3,232.8 1472.3,231.9 1473.4,237.8 1474.4,226.4 1475.5,232.4 1476.5,225.8 1477.6,237.4 1478.6,226.4 1479.7,230.0 1480.7,235.5 1481.8,233.7 1482.8,234.8 1483.9,240.4 1484.9,231.0 1486.0,226.3 1487.0,231.1 1488.1,231.2 1489.1,230.1 1490.2,236.4 1491.2,231.4 1492.3,231.4 1493.3,232.3 1494.4,226.3 1495.4,224.4 1496.5,227.5 1497.5,228.6 1498.6,228.9 1499.6,233.0 1500.7,230.3 1501.7,230.4 1502.8,240.7 1503.8,232.1 1504.9,230.3 1505.9,233.1 1507.0,227.5 1508.0,232.8 1509.1,229.5 1510.1,223.1 1511.2,230.7 1512.2,231.3 1513.3,227.7 1514.3,235.1 1515.4,229.1 1516.4,230.8 1517.5,229.7 1518.5,235.5 1519.6,234.2 1520.6,237.3 1521.7,235.7 1522.7,232.1 1523.8,231.2 1524.8,233.9 1525.9,237.9 1526.9,227.8 1528.0,225.3 1529.0,229.2 1530.1,228.5 1531.1,236.4 1532.2,231.1 1533.2,232.3 1534.3,228.0 1535.3,229.8 1536.4,229.8 1537.4,221.7 1538.5,222.7 1539.5,227.8 1540.6,233.4 1541.6,229.9 1542.7,232.7 1543.7,216.4 1544.8,224.4 1545.8,228.2 1546.9,230.6 1547.9,228.8 1549.0,232.0 1550.0,222.1 1551.1,233.1 1552.1,226.6 1553.2,235.4 1554.2,223.9 1555.3,230.0 1556.3,227.0 1557.4,221.9 1558.4,221.7 1559.5,229.8 1560.5,226.4 1561.6,232.6 1562.6,224.7 1563.7,229.4 1564.7,232.2 1565.8,228.1 1566.8,230.3 1567.9,238.7 1568.9,235.9 1570.0,226.8 1571.0,232.8 1572.1,236.4 1573.1,237.1 1574.2,234.0 1575.2,228.8 1576.3,234.9 1577.3,230.0 1578.4,223.0 1579.4,221.4 1580.5,219.5 1581.5,225.2 1582.6,224.8 1583.6,227.5 1584.7,224.3 1585.7,237.6 1586.8,228.9 1587.8,226.7 1588.9,230.1 1589.9,228.2 1591.0,226.2 1592.0,221.2 1593.1,226.3 1594.1,226.2 1595.2,226.4 1596.2,222.4 1597.3,229.1 1598.3,233.4 1599.4,227.4 1600.4,237.3 1601.5,223.4 1602.5,222.6 1603.6,220.7 1604.6,222.0 1605.7,222.6 1606.7,219.2 1607.8,223.6 1608.8,217.4 1609.9,222.5 1610.9,221.0 1612.0,222.9 1613.0,222.6 1614.1,226.1 1615.1,221.5 1616.2,216.8 1617.2,219.2 1618.3,225.8 1619.3,220.6 1620.4,218.3 1621.4,220.3 1622.5,220.9 1623.5,218.8 1624.6,216.9 1625.6,220.2 1626.7,229.8 1627.7,223.6 1628.8,225.2 1629.8,221.8 1630.9,227.0 1631.9,220.8 1633.0,220.4 1634.0,232.8 1635.1,225.9 1636.1,223.7 1637.2,230.5 1638.2,242.3 1639.3,229.4 1640.3,220.5 1641.4,222.2 1642.4,225.2 1643.5,227.6 1644.5,235.5 1645.6,234.1 1646.6,223.5 1647.7,226.7 1648.7,227.9 1649.8,224.9 1650.8,218.7 1651.9,220.2 1652.9,223.0 1654.0,228.1 1655.0,232.1 1656.1,223.4 1657.1,223.4 1658.2,220.1 1659.2,218.8 1660.3,215.2 1661.3,220.4 1662.4,226.9 1663.4,231.6 1664.5,225.1 1665.5,236.6 1666.6,231.1 1667.6,228.8 1668.7,224.8 1669.7,227.6 1670.8,228.2 1671.8,227.8 1672.9,234.9 1673.9,230.5 1675.0,222.0 1676.0,232.4 1677.1,225.7 1678.1,229.8 1679.2,232.2 1680.2,230.8 1681.3,229.7 1682.3,228.0 1683.4,228.1 1684.4,225.5 1685.5,233.5 1686.5,223.6 1687.6,231.9 1688.6,228.5 1689.7,232.3 1690.7,230.8 1691.8,224.9 1692.8,216.5 1693.9,230.3 1694.9,233.7 1696.0,228.8 1697.0,227.7 1698.1,232.4 1699.1,226.3 1700.2,235.7 1701.2,239.2 1702.3,233.2 1703.3,232.9 1704.4,229.2 1705.4,232.2 1706.5,229.8 1707.5,236.3 1708.6,234.4 1709.6,232.3 1710.7,228.3 1711.7,235.2 1712.8,233.8 1713.8,236.8 1714.9,228.9 1715.9,234.2 1717.0,234.8 1718.0,237.8 1719.1,244.2 1720.1,245.1 1721.2,244.9 1722.2,242.5 1723.3,254.0 1724.3,256.6 1725.4,266.4 1726.4,259.6 1727.5,255.5 1728.5,254.5 1729.6,262.0 1730.6,261.7 1731.7,255.5 1732.7,250.3 1733.8,253.4 1734.8,259.7 1735.9,254.7 1736.9,251.2 1738.0,254.6 1739.0,259.3 1740.1,249.8 1741.1,246.3 1742.2,250.6 1743.2,249.8 1744.3,250.0 1745.3,255.2 1746.4,265.7 1747.4,248.9 1748.5,249.8 1749.5,255.6 1750.6,253.6 1751.6,257.0 1752.7,253.4 1753.7,248.8 1754.8,243.3 1755.8,245.5 1756.9,254.6 1757.9,252.9 1759.0,248.6 1760.0,259.0 1761.1,256.1 1762.1,251.9 1763.2,258.5 1764.2,256.9 1765.3,255.1 1766.3,253.9 1767.4,260.9 1768.4,260.7 1769.5,260.1 1770.5,263.8 1771.6,252.9 1772.6,255.7 1773.7,256.6 1774.7,249.7 1775.8,256.0 1776.8,247.8 1777.9,253.6 1778.9,255.4 1780.0,251.4 1781.0,250.6 1782.1,245.2 1783.1,254.6 1784.2,251.6 1785.2,252.1 1786.3,247.4 1787.3,248.3 1788.4,257.5 1789.4,248.7 1790.5,248.8 1791.5,248.7 1792.6,241.9 1793.6,231.1 1794.7,236.1 1795.7,229.5 1796.8,225.0 1797.8,222.7 1798.9,232.6 1799.9,225.3 1801.0,228.5 1802.0,233.3 1803.1,235.0 1804.1,228.5 1805.2,218.7 1806.2,221.4 1807.3,235.5 1808.3,222.0 1809.4,227.2 1810.4,231.5 1811.5,223.4 1812.5,228.7 1813.6,230.2 1814.6,232.7 1815.7,230.0 1816.7,227.4 1817.8,227.9 1818.8,223.0 1819.9,224.6 1820.9,228.0 1822.0,223.5 1823.0,234.3" fill="none" stroke="#dcdcdc" stroke-width="1.6" stroke-linejoin="round"/><line x1="981" y1="96" x2="981" y2="320" stroke="#d8584a" stroke-width="2"/><line x1="1403.6" y1="96" x2="1403.6" y2="320" stroke="#e6e63c" stroke-width="1.2"/></svg>
<div class="t" style="left:925.99px;top:86.52px;font-size:20.3px;line-height:20.3px;color:#fff;">40.0</div>
<div class="t" style="left:925.99px;top:131.32px;font-size:20.3px;line-height:20.3px;color:#fff;">20.0</div>
<div class="t" style="left:937.28px;top:176.12px;font-size:20.3px;line-height:20.3px;color:#fff;">0.0</div>
<div class="t" style="left:919.23px;top:220.92px;font-size:20.3px;line-height:20.3px;color:#fff;">-20.0</div>
<div class="t" style="left:919.23px;top:265.72px;font-size:20.3px;line-height:20.3px;color:#fff;">-40.0</div>
<div class="t" style="left:919.23px;top:310.52px;font-size:20.3px;line-height:20.3px;color:#fff;">-60.0</div>
<div class="t" style="left:1028.30px;top:327.22px;font-size:20.3px;line-height:20.3px;color:#fff;">210.8</div>
<div class="t" style="left:1119.82px;top:327.22px;font-size:20.3px;line-height:20.3px;color:#fff;">211</div>
<div class="t" style="left:1193.65px;top:327.22px;font-size:20.3px;line-height:20.3px;color:#fff;">211.2</div>
<div class="t" style="left:1275.95px;top:327.22px;font-size:20.3px;line-height:20.3px;color:#fff;">211.4</div>
<div class="t" style="left:1358.25px;top:327.22px;font-size:20.3px;line-height:20.3px;color:#fff;">211.6</div>
<div class="t" style="left:1440.55px;top:327.22px;font-size:20.3px;line-height:20.3px;color:#fff;">211.8</div>
<div class="t" style="left:1530.56px;top:327.22px;font-size:20.3px;line-height:20.3px;color:#fff;">212</div>
<div class="t" style="left:1604.40px;top:327.22px;font-size:20.3px;line-height:20.3px;color:#fff;">212.2</div>
<div class="t" style="left:1686.70px;top:327.22px;font-size:20.3px;line-height:20.3px;color:#fff;">212.4</div>
<div class="t" style="left:1769.00px;top:327.22px;font-size:20.3px;line-height:20.3px;color:#fff;">212.6</div>
<div class="t" style="left:1310.23px;top:355.65px;font-size:22.5px;line-height:22.5px;color:#fff;transform:scaleX(1.0613);">Frequency (MHz)</div>
<div class="t" style="left:788.5px;top:194.4px;width:180px;height:26px;font-size:24px;line-height:26px;color:#fff;text-align:center;transform:rotate(-90deg);transform-origin:50% 50%;">Magnitude (dB)</div>
<div class="r" style="left:0px;top:395px;width:1865px;height:8px;background:#8a8a8a;"></div>
<div class="r" style="left:0px;top:403px;width:1865px;height:58px;background:#252525;"></div>
<div class="r" style="left:0px;top:461px;width:1865px;height:2px;background:#f2f2f2;"></div>
<div class="r" style="left:38.5px;top:418.7px;width:89px;height:32px;background:#262626;border:1.3px solid #8c8c8c;border-radius:4px;box-sizing:border-box;"></div>
<div class="t" style="left:40.31px;top:423.07px;font-size:20px;line-height:20px;color:#fff;transform:scaleX(0.9259);">10B</div>
<div class="r" style="left:144px;top:403px;width:167px;height:58px;background:#a91818;"></div>
<div class="r" style="left:142.5px;top:403px;width:1.5px;height:58px;background:#d8c8c8;"></div>
<div class="t" style="left:292.33px;top:423.23px;font-size:23px;line-height:23px;color:#eaea28;transform:scaleX(0.9862);">rbb BRB/BLN K10B</div>
<div class="r" style="left:0;top:0;width:1865px;height:980px;clip-path:inset(403px 1554px 519px 0)"><div class="t" style="left:292.33px;top:423.23px;font-size:23px;line-height:23px;color:#f07a22;transform:scaleX(0.9862);">rbb BRB/BLN K10B</div>
</div>
<div class="t" style="left:165.79px;top:423.73px;font-size:23px;line-height:23px;color:#f07a72;transform:scaleX(1.0060);">EId: 1148</div>
<div class="r" style="left:0;top:0;width:1865px;height:980px;clip-path:inset(403px 1122.5px 519px 0)"><div class="t" style="left:519.40px;top:423.23px;font-size:23px;line-height:23px;color:#f2f2f2;transform:scaleX(1.0416);">2021-12-21</div>
<div class="t" style="left:655.78px;top:423.23px;font-size:23px;line-height:23px;color:#f2f2f2;transform:scaleX(0.9963);">16:31:28</div>
</div>
<div class="r" style="left:742.5px;top:403px;width:4.5px;height:58px;background:#f0f0f0;"></div>
<div class="r" style="left:762.2px;top:418.1px;width:37.5px;height:32.7px;background:#262626;border:1.3px solid #8c8c8c;border-radius:4px;box-sizing:border-box;"></div>
<div class="r" style="left:834.8px;top:417.7px;width:34px;height:34px;border-radius:50%;background:#1e5f92"></div>
<div class="r" style="left:844.8px;top:427.6px;width:14.4px;height:14.4px;border-radius:50%;background:#f00"></div>
<div class="r" style="left:887px;top:417.5px;width:34.5px;height:34.5px;border-radius:50%;background:#1b4266"></div>
<div class="r" style="left:897.8px;top:427.8px;width:13.2px;height:15px;background:#10141c;"></div>
<div class="r" style="left:1797px;top:416.4px;width:80px;height:32px;background:#262626;border:1.3px solid #8c8c8c;border-radius:4px;box-sizing:border-box;"></div>
<div class="t" style="left:1798.89px;top:421.47px;font-size:20px;line-height:20px;color:#fff;transform:scaleX(0.9155);">DAB</div>
<svg class="r" style="left:0;top:0" width="1865" height="980"><polygon points="95.9,430 110,430 103,438.3" fill="#fff"/><polygon points="772.4,430 787.7,430 780,438" fill="#fff"/><polygon points="1854,428.2 1870,428.2 1862,437" fill="#fff"/></svg>
<div class="r" style="left:0px;top:463px;width:1865px;height:517px;background:#000;"></div>
<div class="r" style="left:0px;top:463px;width:293px;height:517px;background:#1b5685;"></div>
<div class="r" style="left:0px;top:463px;width:293px;height:51px;background:#0f2a4c;"></div>
<div class="t" style="left:6.91px;top:472.57px;font-size:28.5px;line-height:28.5px;color:#f0f028;transform:scaleX(1.0182);">No Service Selected</div>
<div class="t" style="left:9.24px;top:524.53px;font-size:23px;line-height:23px;color:#fff;transform:scaleX(1.0044);">Antenne CB</div>
<div class="t" style="left:9.24px;top:562.53px;font-size:23px;line-height:23px;color:#fff;transform:scaleX(0.9978);">Antenne FFO</div>
<div class="t" style="left:9.24px;top:600.53px;font-size:23px;line-height:23px;color:#fff;transform:scaleX(1.0194);">Antenne P</div>
<div class="t" style="left:9.24px;top:638.53px;font-size:23px;line-height:23px;color:#fff;transform:scaleX(0.9967);">Antenne PBG</div>
<div class="t" style="left:9.24px;top:676.53px;font-size:23px;line-height:23px;color:#fff;transform:scaleX(1.0033);">Antenne PZL</div>
<div class="t" style="left:8.17px;top:714.53px;font-size:23px;line-height:23px;color:#fff;transform:scaleX(0.9865);">COSMO</div>
<div class="t" style="left:7.25px;top:752.53px;font-size:23px;line-height:23px;color:#fff;transform:scaleX(1.0819);">Fritz</div>
<div class="t" style="left:6.96px;top:790.53px;font-size:23px;line-height:23px;color:#fff;transform:scaleX(1.0981);">Inforadio</div>
<div class="t" style="left:7.70px;top:828.53px;font-size:23px;line-height:23px;color:#fff;transform:scaleX(1.0719);">radio1</div>
<div class="t" style="left:7.77px;top:866.53px;font-size:23px;line-height:23px;color:#fff;transform:scaleX(1.0202);">radio1 CB</div>
<div class="t" style="left:7.79px;top:904.53px;font-size:23px;line-height:23px;color:#fff;transform:scaleX(1.0076);">radio1 FFO</div>
<div class="t" style="left:7.73px;top:942.53px;font-size:23px;line-height:23px;color:#fff;transform:scaleX(1.0528);">rbb 88.8</div>
<div class="r" style="left:293px;top:463px;width:7px;height:517px;background:#e4e9ee;"></div>
<div class="r" style="left:300px;top:463px;width:272px;height:517px;background:#1b5685;"></div>
<div class="r" style="left:300px;top:463px;width:271px;height:51px;background:#0f2a4c;"></div>
<div class="t" style="left:307.30px;top:472.57px;font-size:28.5px;line-height:28.5px;color:#fff;transform:scaleX(1.0173);">Service Quality</div>
<div class="t" style="left:314.83px;top:539.92px;font-size:21px;line-height:21px;color:#fff;transform:scaleX(0.9233);">SNR (dB)</div>
<div class="t" style="left:314.07px;top:585.89px;font-size:21px;line-height:21px;color:#fff;transform:scaleX(0.9431);">FIC (ok %)</div>
<div class="t" style="left:314.07px;top:631.86px;font-size:21px;line-height:21px;color:#fff;transform:scaleX(0.9389);">RS (ok %)</div>
<div class="t" style="left:313.94px;top:677.83px;font-size:21px;line-height:21px;color:#fff;transform:scaleX(1.0185);">Null Symbol</div>
<div class="t" style="left:314.78px;top:723.80px;font-size:21px;line-height:21px;color:#fff;transform:scaleX(0.9765);">SymbolTime (ms)</div>
<div class="t" style="left:314.02px;top:769.77px;font-size:21px;line-height:21px;color:#fff;transform:scaleX(0.9725);">FrameTime (ms)</div>
<div class="r" style="left:495px;top:529.8px;width:60px;height:37px;background:#8c8c8c;"></div>
<div class="r" style="left:495px;top:529.8px;width:17px;height:37px;background:#f00;"></div>
<div class="t" style="left:513.18px;top:542.81px;font-size:17px;line-height:17px;color:#f0f0f0;">9,7</div>
<div class="r" style="left:495px;top:575.9px;width:60px;height:37px;background:#8c8c8c;"></div>
<div class="r" style="left:495px;top:575.9px;width:60px;height:37px;background:#008000;"></div>
<div class="t" style="left:510.82px;top:588.91px;font-size:17px;line-height:17px;color:#e8ffb0;">100</div>
<div class="r" style="left:495px;top:622.3px;width:60px;height:37px;background:#8c8c8c;"></div>
<div class="r" style="left:495px;top:668.2px;width:60px;height:37px;background:#8c8c8c;"></div>
<div class="r" style="left:495px;top:668.2px;width:60px;height:37px;background:#008000;"></div>
<div class="r" style="left:495px;top:713.7px;width:60px;height:37px;background:#8c8c8c;"></div>
<div class="r" style="left:495px;top:713.7px;width:14px;height:37px;background:#008000;"></div>
<div class="t" style="left:508.46px;top:726.71px;font-size:17px;line-height:17px;color:#f0f0f0;">0,34</div>
<div class="r" style="left:495px;top:760.6px;width:60px;height:37px;background:#8c8c8c;"></div>
<div class="r" style="left:495px;top:760.6px;width:38px;height:37px;background:#008000;"></div>
<div class="t" style="left:508.46px;top:773.61px;font-size:17px;line-height:17px;color:#f0f0f0;">96,2</div>
<div class="r" style="left:572px;top:463px;width:4px;height:517px;background:#c9cdd2;"></div>
<div class="r" style="left:571px;top:514px;width:1px;height:466px;background:#0b2744;"></div>
<div class="r" style="left:576px;top:563px;width:1px;height:417px;background:#0b2744;"></div>
<div class="r" style="left:576px;top:463px;width:409px;height:517px;background:#1b5685;"></div>
<div class="r" style="left:576px;top:463px;width:409px;height:51px;background:#0f2a4c;"></div>
<div class="r" style="left:585px;top:514px;width:400px;height:49px;background:#0f2a4c;"></div>
<div class="r" style="left:588px;top:473.3px;width:182.79999999999995px;height:41.69999999999999px;background:#858585;border-radius:4px 14px 0 0;border:1px solid #9aa4ae;border-bottom:none;box-sizing:border-box;"></div>
<div class="r" style="left:772px;top:473.3px;width:228px;height:41.69999999999999px;background:#858585;border-radius:4px 14px 0 0;border:1px solid #9aa4ae;border-bottom:none;box-sizing:border-box;"></div>
<div class="r" style="left:588px;top:522.3px;width:138.5px;height:41.5px;background:#858585;border-radius:4px 14px 0 0;border:1px solid #9aa4ae;border-bottom:none;box-sizing:border-box;"></div>
<div class="r" style="left:727.8px;top:522.3px;width:113.20000000000005px;height:42.200000000000045px;background:#1b5685;border-radius:4px 14px 0 0;border:1px solid #7f9cb8;border-bottom:none;box-sizing:border-box;"></div>
<div class="r" style="left:842.4px;top:522.3px;width:157.60000000000002px;height:41.5px;background:#858585;border-radius:4px 14px 0 0;border:1px solid #9aa4ae;border-bottom:none;box-sizing:border-box;"></div>
<div class="r" style="left:985px;top:463px;width:880px;height:517px;background:#000;"></div>
<div class="t" style="left:656.14px;top:483.11px;font-size:25.5px;line-height:25.5px;color:#dcdcdc;transform:scaleX(0.9291);">AAC</div>
<div class="t" style="left:839.35px;top:483.11px;font-size:25.5px;line-height:25.5px;color:#dcdcdc;transform:scaleX(1.0290);">Options</div>
<div class="t" style="left:631.84px;top:533.01px;font-size:25.5px;line-height:25.5px;color:#dcdcdc;transform:scaleX(0.9229);">Sync</div>
<div class="t" style="left:771.55px;top:533.01px;font-size:25.5px;line-height:25.5px;color:#fff;transform:scaleX(0.9524);">TII</div>
<div class="t" style="left:886.93px;top:533.01px;font-size:25.5px;line-height:25.5px;color:#dcdcdc;transform:scaleX(1.0338);">Audio</div>
<div class="r" style="left:628.4px;top:578.6px;width:13.7px;height:13.7px;border-radius:50%;background:#f00"></div>
<div class="r" style="left:672px;top:578px;width:13px;height:14.6px;background:#0f2f4f;"></div>
<div class="r" style="left:599.2px;top:606.8px;width:371px;height:2px;background:#8fb2cf;"></div>
<div class="t" style="left:597.32px;top:637.58px;font-size:22px;line-height:22px;color:#fff;transform:scaleX(1.0383);">Pattern</div>
<div class="t" style="left:698.05px;top:637.58px;font-size:22px;line-height:22px;color:#fff;transform:scaleX(1.0763);">MainId</div>
<div class="t" style="left:798.40px;top:637.58px;font-size:22px;line-height:22px;color:#fff;transform:scaleX(1.0107);">SubId</div>
<div class="t" style="left:885.17px;top:637.58px;font-size:22px;line-height:22px;color:#fff;transform:scaleX(1.0372);">Strength</div>
<div class="r" style="left:599.2px;top:661.6px;width:371px;height:1.2px;background:#a9c3d9;"></div>
<div class="t" style="left:600.78px;top:682.62px;font-size:21px;line-height:21px;color:#fff;transform:scaleX(0.9733);">0x6c</div>
<div class="t" style="left:701.99px;top:682.62px;font-size:21px;line-height:21px;color:#fff;transform:scaleX(1.0306);">30</div>
<div class="t" style="left:800.76px;top:682.62px;font-size:21px;line-height:21px;color:#fff;">5</div>
<div class="t" style="left:887.68px;top:682.62px;font-size:21px;line-height:21px;color:#fff;transform:scaleX(0.9741);">0.80</div>
<div class="t" style="left:600.78px;top:720.07px;font-size:21px;line-height:21px;color:#fff;transform:scaleX(0.9733);">0x6c</div>
<div class="t" style="left:701.99px;top:720.07px;font-size:21px;line-height:21px;color:#fff;transform:scaleX(1.0306);">30</div>
<div class="t" style="left:800.55px;top:720.07px;font-size:21px;line-height:21px;color:#fff;">22</div>
<div class="t" style="left:887.68px;top:720.07px;font-size:21px;line-height:21px;color:#fff;transform:scaleX(0.9806);">0.22</div>
<div class="t" style="left:600.78px;top:757.52px;font-size:21px;line-height:21px;color:#fff;transform:scaleX(0.9733);">0x6c</div>
<div class="t" style="left:701.99px;top:757.52px;font-size:21px;line-height:21px;color:#fff;transform:scaleX(1.0306);">30</div>
<div class="t" style="left:800.81px;top:757.52px;font-size:21px;line-height:21px;color:#fff;">3</div>
<div class="t" style="left:887.68px;top:757.52px;font-size:21px;line-height:21px;color:#fff;transform:scaleX(0.9780);">0.19</div>
<div class="r" style="left:985px;top:463px;width:8px;height:517px;background:#eceff2;"></div>
<div class="r" style="left:993px;top:463px;width:872px;height:30px;background:#0f2a4c;"></div>
<div class="t" style="left:1282.80px;top:466.70px;font-size:21.5px;line-height:21.5px;color:#fff;transform:scaleX(0.9967);">Channel Impulse Response (CIR)</div>
<svg class="r" style="left:1840px;top:466px" width="24" height="22"><polygon points="2.5,3.5 20.5,3.5 11.5,19.5" fill="none" stroke="#cfd6e0" stroke-width="1.3"/></svg>
<div class="r" style="left:1008.25px;top:510.45000000000005px;width:19.5px;height:19.5px;border-radius:50%;background:#e4e4e4"></div>
<div class="t" style="left:1032.60px;top:510.17px;font-size:20px;line-height:20px;color:#fff;transform:scaleX(0.8459);">Freeze</div>
<div class="r" style="left:1114.75px;top:510.45000000000005px;width:19.5px;height:19.5px;border-radius:50%;background:#e4e4e4"></div>
<div class="t" style="left:1140.21px;top:510.17px;font-size:20px;line-height:20px;color:#fff;transform:scaleX(0.8908);">Gradient</div>
<div class="t" style="left:1014.79px;top:572.67px;font-size:20px;line-height:20px;color:#fff;transform:scaleX(0.9029);">Smoothing Level</div>
<svg class="r" style="left:0;top:0" width="1865" height="980"><line x1="1018.7" y1="601" x2="1018.7" y2="607" stroke="#bbb" stroke-width="1.3"/><line x1="1038.4" y1="601" x2="1038.4" y2="607" stroke="#bbb" stroke-width="1.3"/><line x1="1058.0" y1="601" x2="1058.0" y2="607" stroke="#bbb" stroke-width="1.3"/><line x1="1077.7" y1="601" x2="1077.7" y2="607" stroke="#bbb" stroke-width="1.3"/><line x1="1097.4" y1="601" x2="1097.4" y2="607" stroke="#bbb" stroke-width="1.3"/><line x1="1117.0" y1="601" x2="1117.0" y2="607" stroke="#bbb" stroke-width="1.3"/><line x1="1136.7" y1="601" x2="1136.7" y2="607" stroke="#bbb" stroke-width="1.3"/><line x1="1156.4" y1="601" x2="1156.4" y2="607" stroke="#bbb" stroke-width="1.3"/><line x1="1176.1" y1="601" x2="1176.1" y2="607" stroke="#bbb" stroke-width="1.3"/><line x1="1195.7" y1="601" x2="1195.7" y2="607" stroke="#bbb" stroke-width="1.3"/></svg>
<div class="r" style="left:1009px;top:616.2px;width:205px;height:3px;background:#e6e6e6;border-radius:2px;"></div>
<div class="r" style="left:1047.5px;top:607.6px;width:20px;height:20px;border-radius:50%;background:linear-gradient(180deg,#ececec 0%,#b8b8b8 50%,#858585 100%);box-shadow:0 0 1.5px 0.5px rgba(0,0,0,0.6);"></div>
<div class="t" style="left:1015.02px;top:654.07px;font-size:20px;line-height:20px;color:#fff;transform:scaleX(0.8992);">Zoom X</div>
<div class="r" style="left:1009px;top:691.2px;width:205px;height:3px;background:#e6e6e6;border-radius:2px;"></div>
<div class="r" style="left:1008.7px;top:682.6px;width:20px;height:20px;border-radius:50%;background:linear-gradient(180deg,#ececec 0%,#b8b8b8 50%,#858585 100%);box-shadow:0 0 1.5px 0.5px rgba(0,0,0,0.6);"></div>
<div class="t" style="left:1015.02px;top:728.77px;font-size:20px;line-height:20px;color:#fff;transform:scaleX(0.8899);">Zoom Y</div>
<div class="r" style="left:1223.8px;top:495.2px;width:7px;height:148px;background:#a3a3a3;border-radius:4px;"></div>
<svg class="r" style="left:0;top:0" width="1865" height="980"><rect x="1461.7" y="514" width="13.3" height="151.5" fill="#4a4a4a"/><g stroke="#9a9a9a" stroke-width="1.1"><line x1="1386.7" y1="514" x2="1386.7" y2="665.5"/><line x1="1418.9" y1="514" x2="1418.9" y2="665.5"/><line x1="1451.2" y1="514" x2="1451.2" y2="665.5"/><line x1="1483.4" y1="514" x2="1483.4" y2="665.5"/><line x1="1515.7" y1="514" x2="1515.7" y2="665.5"/><line x1="1547.9" y1="514" x2="1547.9" y2="665.5"/><line x1="1580.2" y1="514" x2="1580.2" y2="665.5"/><line x1="1612.4" y1="514" x2="1612.4" y2="665.5"/><line x1="1644.7" y1="514" x2="1644.7" y2="665.5"/><line x1="1676.9" y1="514" x2="1676.9" y2="665.5"/><line x1="1709.2" y1="514" x2="1709.2" y2="665.5"/><line x1="1741.4" y1="514" x2="1741.4" y2="665.5"/><line x1="1773.7" y1="514" x2="1773.7" y2="665.5"/><line x1="1805.9" y1="514" x2="1805.9" y2="665.5"/><line x1="1838.2" y1="514" x2="1838.2" y2="665.5"/><line x1="1365" y1="544.3" x2="1846" y2="544.3"/><line x1="1365" y1="574.6" x2="1846" y2="574.6"/><line x1="1365" y1="604.9" x2="1846" y2="604.9"/><line x1="1365" y1="635.2" x2="1846" y2="635.2"/></g><rect x="1365" y="514" width="481" height="151.5" fill="none" stroke="#a8a8a8" stroke-width="1.5"/><line x1="1475" y1="514" x2="1475" y2="665.5" stroke="#e8e840" stroke-width="1" stroke-dasharray="1.5,1.5"/><polyline points="1366.0,652.2 1366.5,640.1 1367.1,633.8 1367.6,645.5 1368.2,653.4 1368.7,643.8 1369.3,638.4 1369.8,632.8 1370.4,651.2 1370.9,653.6 1371.5,637.5 1372.0,637.8 1372.6,629.2 1373.1,632.8 1373.7,642.1 1374.2,644.4 1374.8,621.4 1375.3,642.5 1375.9,648.6 1376.4,652.1 1377.0,642.4 1377.5,641.0 1378.1,644.9 1378.6,642.9 1379.2,640.0 1379.7,636.3 1380.3,632.6 1380.8,639.5 1381.4,629.1 1381.9,629.1 1382.5,644.3 1383.0,644.3 1383.6,654.5 1384.1,643.4 1384.7,648.7 1385.2,641.1 1385.8,615.1 1386.3,639.9 1386.9,635.0 1387.4,652.3 1388.0,645.5 1388.5,637.1 1389.1,642.4 1389.6,639.2 1390.2,641.0 1390.7,650.3 1391.3,638.4 1391.8,648.4 1392.4,627.5 1392.9,644.8 1393.5,636.8 1394.0,641.6 1394.6,634.3 1395.1,646.3 1395.7,634.4 1396.2,642.4 1396.8,631.9 1397.3,636.0 1397.9,640.4 1398.4,648.4 1399.0,636.5 1399.5,637.8 1400.1,628.3 1400.6,643.9 1401.2,637.8 1401.7,637.6 1402.3,639.4 1402.8,640.2 1403.4,640.5 1403.9,646.9 1404.5,650.9 1405.0,646.3 1405.6,637.7 1406.1,629.4 1406.7,632.9 1407.2,632.6 1407.8,634.9 1408.3,635.7 1408.9,640.0 1409.4,635.6 1410.0,627.0 1410.5,627.6 1411.1,627.6 1411.6,626.7 1412.2,638.6 1412.7,633.9 1413.3,634.2 1413.8,650.7 1414.4,623.1 1414.9,625.7 1415.5,639.1 1416.0,635.7 1416.6,640.5 1417.1,649.2 1417.7,643.8 1418.2,639.3 1418.8,632.8 1419.3,635.4 1419.9,641.0 1420.4,631.0 1421.0,647.3 1421.5,636.2 1422.1,632.5 1422.6,643.6 1423.2,657.0 1423.7,651.1 1424.3,641.1 1424.8,637.7 1425.4,629.1 1425.9,649.1 1426.5,642.8 1427.0,636.9 1427.6,642.9 1428.1,661.6 1428.7,637.5 1429.2,622.8 1429.8,632.0 1430.3,648.7 1430.9,646.2 1431.4,640.8 1432.0,621.7 1432.5,635.1 1433.1,640.5 1433.6,629.3 1434.2,641.5 1434.7,626.9 1435.3,646.2 1435.8,646.5 1436.4,636.7 1436.9,630.0 1437.5,635.6 1438.0,639.0 1438.6,656.8 1439.1,649.5 1439.7,647.9 1440.2,647.1 1440.8,637.9 1441.3,644.5 1441.9,636.0 1442.4,640.9 1443.0,644.8 1443.5,641.5 1444.1,638.6 1444.6,634.8 1445.2,645.3 1445.7,644.4 1446.3,653.5 1446.8,630.2 1447.4,629.1 1447.9,642.3 1448.5,646.1 1449.0,652.7 1449.6,641.8 1450.1,640.4 1450.7,624.1 1451.2,638.4 1451.8,648.2 1452.3,662.8 1452.9,632.7 1453.4,639.7 1454.0,655.1 1454.5,642.0 1455.1,655.3 1455.6,615.0 1456.2,630.3 1456.7,636.3 1457.3,643.0 1457.8,659.8 1458.4,645.0 1458.9,655.2 1459.5,638.6 1460.0,659.3 1460.6,651.3 1461.1,633.1 1461.7,627.8 1462.2,650.4 1462.8,655.5 1463.3,636.3 1463.9,634.6 1464.4,649.5 1465.0,648.6 1465.5,648.5 1466.1,652.5 1466.6,648.8 1467.2,632.6 1467.7,635.6 1468.3,624.7 1468.8,641.1 1469.4,643.2 1469.9,650.3 1470.5,644.0 1471.0,653.1 1471.6,657.8 1472.1,638.0 1472.7,630.0 1473.2,632.5 1473.8,630.5 1474.3,614.3 1474.9,614.3 1475.4,584.0 1476.0,584.0 1476.5,614.3 1477.1,614.3 1477.6,632.5 1478.2,643.6 1478.7,630.4 1479.3,634.7 1479.8,618.9 1480.4,627.0 1480.9,623.9 1481.5,617.8 1482.0,617.6 1482.6,599.4 1483.1,599.4 1483.7,569.1 1484.2,569.1 1484.8,599.4 1485.3,599.4 1485.9,616.5 1486.4,617.6 1487.0,618.4 1487.5,627.4 1488.1,617.0 1488.6,617.0 1489.2,615.6 1489.7,613.4 1490.3,612.0 1490.8,633.7 1491.4,627.1 1491.9,641.0 1492.5,623.9 1493.0,616.6 1493.6,627.2 1494.1,620.2 1494.7,619.9 1495.2,611.0 1495.8,611.0 1496.3,626.1 1496.9,626.1 1497.4,610.3 1498.0,614.2 1498.5,625.0 1499.1,623.8 1499.6,625.1 1500.2,625.1 1500.7,629.0 1501.3,631.0 1501.8,639.4 1502.4,635.8 1502.9,617.2 1503.5,625.1 1504.0,630.3 1504.6,633.7 1505.1,632.3 1505.7,630.3 1506.2,638.8 1506.8,633.3 1507.3,632.9 1507.9,641.4 1508.4,643.0 1509.0,645.3 1509.5,646.5 1510.1,631.0 1510.6,656.4 1511.2,642.2 1511.7,643.9 1512.3,644.5 1512.8,638.9 1513.4,630.2 1513.9,638.2 1514.5,641.0 1515.0,645.3 1515.6,642.0 1516.1,633.3 1516.7,643.3 1517.2,650.6 1517.8,652.4 1518.3,651.4 1518.9,653.7 1519.4,633.7 1520.0,637.8 1520.5,643.2 1521.1,629.9 1521.6,645.9 1522.2,636.1 1522.7,634.7 1523.3,653.8 1523.8,655.9 1524.4,650.9 1524.9,635.5 1525.5,630.8 1526.0,651.0 1526.6,634.4 1527.1,644.4 1527.7,645.5 1528.2,647.0 1528.8,641.3 1529.3,641.3 1529.9,626.1 1530.4,626.1 1531.0,639.2 1531.5,624.8 1532.1,618.1 1532.6,631.0 1533.2,612.8 1533.7,612.8 1534.3,582.5 1534.8,582.5 1535.4,612.8 1535.9,612.8 1536.5,631.0 1537.0,637.1 1537.6,655.0 1538.1,647.8 1538.7,644.7 1539.2,642.3 1539.8,641.1 1540.3,644.8 1540.9,640.9 1541.4,646.8 1542.0,650.0 1542.5,630.5 1543.1,638.1 1543.6,638.2 1544.2,654.8 1544.7,644.8 1545.3,635.7 1545.8,652.1 1546.4,634.2 1546.9,644.6 1547.5,639.1 1548.0,643.0 1548.6,640.5 1549.1,632.2 1549.7,644.5 1550.2,629.6 1550.8,647.3 1551.3,650.3 1551.9,637.2 1552.4,650.4 1553.0,646.0 1553.5,635.1 1554.1,631.6 1554.6,655.6 1555.2,639.4 1555.7,626.5 1556.3,630.8 1556.8,643.0 1557.4,647.2 1557.9,645.1 1558.5,651.9 1559.0,645.3 1559.6,644.0 1560.1,643.5 1560.7,632.6 1561.2,643.1 1561.8,654.2 1562.3,634.8 1562.9,650.2 1563.4,646.6 1564.0,643.7 1564.5,645.1 1565.1,650.7 1565.6,645.1 1566.2,624.6 1566.7,645.4 1567.3,643.6 1567.8,633.1 1568.4,635.2 1568.9,635.2 1569.5,634.4 1570.0,657.5 1570.6,650.8 1571.1,642.0 1571.7,638.1 1572.2,631.2 1572.8,637.2 1573.3,643.6 1573.9,642.0 1574.4,643.9 1575.0,640.3 1575.5,636.5 1576.1,644.4 1576.6,649.0 1577.2,649.8 1577.7,634.0 1578.3,630.9 1578.8,632.9 1579.4,618.5 1579.9,618.5 1580.5,588.2 1581.0,588.2 1581.6,618.5 1582.1,636.7 1582.7,636.7 1583.2,636.8 1583.8,646.4 1584.3,643.5 1584.9,639.0 1585.4,630.8 1586.0,647.5 1586.5,650.4 1587.1,636.3 1587.6,650.6 1588.2,639.3 1588.7,646.5 1589.3,643.5 1589.8,657.2 1590.4,637.8 1590.9,645.8 1591.5,649.9 1592.0,625.9 1592.6,634.7 1593.1,612.7 1593.7,635.9 1594.2,623.1 1594.8,623.1 1595.3,629.0 1595.9,620.0 1596.4,620.0 1597.0,604.9 1597.5,604.9 1598.1,620.0 1598.6,646.2 1599.2,652.8 1599.7,636.1 1600.3,636.1 1600.8,641.0 1601.4,649.5 1601.9,659.3 1602.5,639.9 1603.0,642.7 1603.6,656.0 1604.1,644.0 1604.7,654.8 1605.2,643.7 1605.8,641.1 1606.3,639.2 1606.9,640.1 1607.4,640.6 1608.0,651.3 1608.5,646.2 1609.1,646.8 1609.6,644.6 1610.2,640.2 1610.7,636.9 1611.3,628.3 1611.8,661.8 1612.4,640.9 1612.9,643.7 1613.5,623.7 1614.0,632.7 1614.6,654.7 1615.1,640.1 1615.7,646.2 1616.2,634.4 1616.8,650.0 1617.3,643.8 1617.9,643.4 1618.4,643.1 1619.0,647.0 1619.5,657.7 1620.1,640.0 1620.6,633.8 1621.2,641.9 1621.7,650.5 1622.3,641.3 1622.8,637.5 1623.4,643.1 1623.9,642.4 1624.5,630.7 1625.0,650.2 1625.6,647.5 1626.1,658.3 1626.7,649.5 1627.2,649.0 1627.8,615.5 1628.3,615.5 1628.9,600.4 1629.4,600.4 1630.0,615.5 1630.5,624.3 1631.1,640.9 1631.6,656.2 1632.2,640.3 1632.7,649.6 1633.3,629.5 1633.8,651.1 1634.4,647.8 1634.9,655.9 1635.5,642.7 1636.0,650.5 1636.6,643.5 1637.1,645.4 1637.7,647.5 1638.2,635.0 1638.8,633.8 1639.3,640.8 1639.9,649.4 1640.4,627.6 1641.0,612.5 1641.5,612.5 1642.1,627.6 1642.6,627.6 1643.2,648.5 1643.7,651.8 1644.3,651.1 1644.8,644.7 1645.4,630.7 1645.9,641.0 1646.5,646.2 1647.0,655.8 1647.6,641.8 1648.1,642.4 1648.7,652.2 1649.2,652.1 1649.8,643.5 1650.3,634.0 1650.9,636.2 1651.4,639.9 1652.0,644.6 1652.5,639.8 1653.1,642.0 1653.6,624.4 1654.2,649.7 1654.7,645.9 1655.3,632.2 1655.8,643.3 1656.4,630.6 1656.9,641.4 1657.5,640.9 1658.0,645.1 1658.6,653.8 1659.1,651.3 1659.7,625.0 1660.2,635.2 1660.8,636.5 1661.3,633.8 1661.9,636.7 1662.4,633.3 1663.0,643.5 1663.5,644.1 1664.1,634.3 1664.6,644.3 1665.2,653.3 1665.7,645.1 1666.3,646.9 1666.8,637.6 1667.4,647.6 1667.9,651.4 1668.5,645.8 1669.0,629.8 1669.6,641.3 1670.1,640.8 1670.7,642.0 1671.2,639.7 1671.8,634.3 1672.3,630.0 1672.9,654.4 1673.4,632.3 1674.0,641.2 1674.5,641.3 1675.1,622.8 1675.6,626.1 1676.2,626.2 1676.7,632.7 1677.3,649.6 1677.8,638.9 1678.4,635.8 1678.9,642.6 1679.5,661.3 1680.0,646.9 1680.6,644.2 1681.1,651.4 1681.7,628.2 1682.2,642.8 1682.8,645.4 1683.3,644.9 1683.9,648.9 1684.4,649.2 1685.0,642.1 1685.5,639.6 1686.1,646.1 1686.6,643.3 1687.2,653.7 1687.7,639.0 1688.3,648.0 1688.8,641.0 1689.4,649.5 1689.9,647.1 1690.5,640.9 1691.0,652.0 1691.6,622.9 1692.1,640.5 1692.7,642.6 1693.2,648.2 1693.8,629.7 1694.3,629.6 1694.9,638.5 1695.4,653.0 1696.0,647.4 1696.5,637.7 1697.1,645.9 1697.6,652.2 1698.2,652.9 1698.7,649.6 1699.3,642.8 1699.8,647.5 1700.4,642.6 1700.9,619.4 1701.5,625.4 1702.0,649.0 1702.6,640.0 1703.1,641.2 1703.7,643.2 1704.2,633.7 1704.8,644.0 1705.3,645.0 1705.9,645.5 1706.4,643.3 1707.0,631.8 1707.5,634.8 1708.1,652.4 1708.6,646.8 1709.2,649.2 1709.7,636.2 1710.3,639.7 1710.8,634.6 1711.4,641.9 1711.9,657.8 1712.5,640.0 1713.0,640.1 1713.6,637.8 1714.1,652.4 1714.7,642.5 1715.2,647.8 1715.8,648.4 1716.3,639.9 1716.9,639.1 1717.4,649.2 1718.0,656.9 1718.5,663.9 1719.1,649.0 1719.6,633.7 1720.2,641.8 1720.7,660.5 1721.3,651.1 1721.8,639.6 1722.4,628.2 1722.9,631.2 1723.5,629.1 1724.0,629.1 1724.6,614.0 1725.1,614.0 1725.7,629.1 1726.2,629.1 1726.8,642.3 1727.3,645.4 1727.9,639.7 1728.4,630.2 1729.0,634.9 1729.5,638.0 1730.1,643.7 1730.6,654.8 1731.2,644.4 1731.7,637.9 1732.3,650.0 1732.8,632.7 1733.4,644.0 1733.9,639.3 1734.5,644.6 1735.0,652.7 1735.6,626.3 1736.1,650.1 1736.7,635.4 1737.2,646.0 1737.8,640.3 1738.3,648.6 1738.9,646.2 1739.4,635.0 1740.0,625.5 1740.5,647.4 1741.1,642.6 1741.6,634.5 1742.2,646.6 1742.7,636.8 1743.3,648.1 1743.8,637.8 1744.4,638.2 1744.9,631.9 1745.5,638.2 1746.0,651.5 1746.6,637.7 1747.1,650.7 1747.7,636.9 1748.2,629.3 1748.8,636.0 1749.3,646.1 1749.9,632.8 1750.4,639.9 1751.0,652.1 1751.5,646.1 1752.1,630.9 1752.6,643.5 1753.2,641.3 1753.7,644.9 1754.3,656.2 1754.8,647.8 1755.4,639.8 1755.9,640.2 1756.5,643.4 1757.0,659.8 1757.6,633.9 1758.1,635.5 1758.7,633.1 1759.2,630.6 1759.8,644.7 1760.3,647.4 1760.9,640.1 1761.4,628.3 1762.0,654.6 1762.5,645.3 1763.1,648.3 1763.6,638.2 1764.2,629.8 1764.7,643.4 1765.3,652.4 1765.8,642.8 1766.4,644.6 1766.9,655.0 1767.5,636.2 1768.0,645.9 1768.6,636.9 1769.1,641.3 1769.7,634.2 1770.2,626.1 1770.8,626.1 1771.3,641.3 1771.9,632.3 1772.4,644.2 1773.0,655.1 1773.5,645.4 1774.1,639.7 1774.6,650.0 1775.2,647.0 1775.7,640.4 1776.3,643.4 1776.8,665.5 1777.4,648.2 1777.9,639.3 1778.5,639.4 1779.0,633.6 1779.6,647.0 1780.1,621.8 1780.7,633.6 1781.2,638.8 1781.8,633.0 1782.3,633.4 1782.9,640.5 1783.4,647.1 1784.0,634.3 1784.5,637.9 1785.1,657.2 1785.6,652.7 1786.2,639.4 1786.7,641.0 1787.3,639.8 1787.8,636.7 1788.4,640.4 1788.9,629.0 1789.5,645.7 1790.0,645.8 1790.6,639.9 1791.1,635.8 1791.7,635.1 1792.2,629.3 1792.8,644.8 1793.3,632.9 1793.9,637.4 1794.4,650.2 1795.0,644.1 1795.5,625.3 1796.1,634.1 1796.6,645.2 1797.2,662.1 1797.7,650.2 1798.3,648.7 1798.8,642.2 1799.4,623.3 1799.9,634.2 1800.5,638.8 1801.0,649.5 1801.6,652.6 1802.1,644.9 1802.7,646.3 1803.2,618.0 1803.8,643.1 1804.3,647.3 1804.9,633.4 1805.4,627.6 1806.0,627.6 1806.5,632.6 1807.1,642.8 1807.6,653.2 1808.2,640.6 1808.7,638.0 1809.3,644.5 1809.8,636.7 1810.4,634.9 1810.9,648.7 1811.5,659.7 1812.0,663.5 1812.6,645.3 1813.1,632.4 1813.7,633.0 1814.2,629.9 1814.8,625.8 1815.3,640.4 1815.9,633.4 1816.4,653.8 1817.0,637.7 1817.5,638.5 1818.1,642.6 1818.6,645.8 1819.2,651.7 1819.7,642.0 1820.3,631.7 1820.8,644.1 1821.4,638.0 1821.9,647.2 1822.5,640.6 1823.0,650.3 1823.6,639.9 1824.1,643.7 1824.7,639.7 1825.2,646.9 1825.8,652.3 1826.3,645.9 1826.9,634.1 1827.4,628.4 1828.0,643.5 1828.5,635.8 1829.1,635.3 1829.6,638.3 1830.2,654.5 1830.7,640.7 1831.3,650.0 1831.8,633.3 1832.4,634.8 1832.9,636.4 1833.5,662.3 1834.0,639.1 1834.6,636.1 1835.1,652.0 1835.7,635.2 1836.2,640.9 1836.8,643.5 1837.3,648.1 1837.9,651.1 1838.4,646.6 1839.0,617.4 1839.5,638.0 1840.1,640.1 1840.6,647.3 1841.2,647.7 1841.7,647.2 1842.3,649.9 1842.8,635.8 1843.4,643.7 1843.9,635.2 1844.5,650.9" fill="none" stroke="#f0f0f0" stroke-width="1.05"/><circle cx="1475.7" cy="584.0" r="6" fill="#1ea6d8"/><circle cx="1484.0" cy="569.1" r="6" fill="#f2ea1a"/><circle cx="1534.5" cy="582.5" r="6" fill="#e21616"/><circle cx="1580.6" cy="588.2" r="6" fill="#7a2ad8"/></svg>
<div class="t" style="left:1308.73px;top:504.52px;font-size:20.3px;line-height:20.3px;color:#fff;">-10.0</div>
<div class="t" style="left:1308.73px;top:534.82px;font-size:20.3px;line-height:20.3px;color:#fff;">-20.0</div>
<div class="t" style="left:1308.73px;top:565.12px;font-size:20.3px;line-height:20.3px;color:#fff;">-30.0</div>
<div class="t" style="left:1308.73px;top:595.42px;font-size:20.3px;line-height:20.3px;color:#fff;">-40.0</div>
<div class="t" style="left:1308.73px;top:625.72px;font-size:20.3px;line-height:20.3px;color:#fff;">-50.0</div>
<div class="t" style="left:1308.73px;top:656.02px;font-size:20.3px;line-height:20.3px;color:#fff;">-60.0</div>
<div class="t" style="left:1376.32px;top:671.90px;font-size:14.3px;line-height:14.3px;color:#fff;">-60</div>
<div class="t" style="left:1408.57px;top:692.70px;font-size:14.3px;line-height:14.3px;color:#fff;">-40</div>
<div class="t" style="left:1440.82px;top:671.90px;font-size:14.3px;line-height:14.3px;color:#fff;">-20</div>
<div class="t" style="left:1479.42px;top:692.70px;font-size:14.3px;line-height:14.3px;color:#fff;">0</div>
<div class="t" style="left:1507.70px;top:671.90px;font-size:14.3px;line-height:14.3px;color:#fff;">20</div>
<div class="t" style="left:1539.95px;top:692.70px;font-size:14.3px;line-height:14.3px;color:#fff;">40</div>
<div class="t" style="left:1572.20px;top:671.90px;font-size:14.3px;line-height:14.3px;color:#fff;">60</div>
<div class="t" style="left:1604.45px;top:692.70px;font-size:14.3px;line-height:14.3px;color:#fff;">80</div>
<div class="t" style="left:1632.72px;top:671.90px;font-size:14.3px;line-height:14.3px;color:#fff;">100</div>
<div class="t" style="left:1664.97px;top:692.70px;font-size:14.3px;line-height:14.3px;color:#fff;">120</div>
<div class="t" style="left:1697.22px;top:671.90px;font-size:14.3px;line-height:14.3px;color:#fff;">140</div>
<div class="t" style="left:1729.47px;top:692.70px;font-size:14.3px;line-height:14.3px;color:#fff;">160</div>
<div class="t" style="left:1761.72px;top:671.90px;font-size:14.3px;line-height:14.3px;color:#fff;">180</div>
<div class="t" style="left:1793.97px;top:692.70px;font-size:14.3px;line-height:14.3px;color:#fff;">200</div>
<div class="t" style="left:1826.22px;top:671.90px;font-size:14.3px;line-height:14.3px;color:#fff;">220</div>
<div class="t" style="left:1492.40px;top:715.55px;font-size:20.5px;line-height:20.5px;color:#fff;">Distance Difference (km)</div>
<div class="t" style="left:1199px;top:578px;width:160px;height:24px;font-size:20.5px;line-height:24px;color:#fff;text-align:center;transform:rotate(-90deg);transform-origin:50% 50%;">Magnitude (dB)</div>
<div class="r" style="left:993px;top:747.5px;width:872px;height:8px;background:#8a8a8a;"></div>
<div class="r" style="left:993px;top:755.3px;width:872px;height:30px;background:#0f2a4c;"></div>
<div class="t" style="left:1391.65px;top:758.90px;font-size:21.5px;line-height:21.5px;color:#fff;transform:scaleX(0.9740);">TII Carriers</div>
<svg class="r" style="left:1840px;top:759px" width="24" height="22"><polygon points="2.5,3.5 20.5,3.5 11.5,19.5" fill="none" stroke="#cfd6e0" stroke-width="1.3"/></svg>
<svg class="r" style="left:0;top:0" width="1865" height="980"><g stroke="#9a9a9a" stroke-width="1.1"><line x1="1152.7" y1="805.6" x2="1152.7" y2="972.6"/><line x1="1223.2" y1="805.6" x2="1223.2" y2="972.6"/><line x1="1293.5" y1="805.6" x2="1293.5" y2="972.6"/><line x1="1366.2" y1="805.6" x2="1366.2" y2="972.6"/><line x1="1437.6" y1="805.6" x2="1437.6" y2="972.6"/><line x1="1509.4" y1="805.6" x2="1509.4" y2="972.6"/><line x1="1580.4" y1="805.6" x2="1580.4" y2="972.6"/><line x1="1651.4" y1="805.6" x2="1651.4" y2="972.6"/><line x1="1723.4" y1="805.6" x2="1723.4" y2="972.6"/><line x1="1794.7" y1="805.6" x2="1794.7" y2="972.6"/><line x1="1108" y1="939.2" x2="1838" y2="939.2"/><line x1="1108" y1="905.8" x2="1838" y2="905.8"/><line x1="1108" y1="872.4" x2="1838" y2="872.4"/><line x1="1108" y1="839.0" x2="1838" y2="839.0"/></g><rect x="1108" y="805.6" width="730" height="167.0" fill="none" stroke="#a8a8a8" stroke-width="1.5"/><line x1="1108" y1="970.5" x2="1199.5" y2="970.5" stroke="#b0b0b0" stroke-width="1.5"/><line x1="1747.5" y1="970.5" x2="1838" y2="970.5" stroke="#b0b0b0" stroke-width="1.5"/><line x1="1199.5" y1="807.6" x2="1199.5" y2="972.6" stroke="#f0e020" stroke-width="2" stroke-dasharray="1.6,2.4"/><line x1="1336.6" y1="807.6" x2="1336.6" y2="972.6" stroke="#f0e020" stroke-width="2" stroke-dasharray="1.6,2.4"/><line x1="1473.6" y1="807.6" x2="1473.6" y2="972.6" stroke="#f0e020" stroke-width="2" stroke-dasharray="1.6,2.4"/><line x1="1610.5" y1="807.6" x2="1610.5" y2="972.6" stroke="#f0e020" stroke-width="2" stroke-dasharray="1.6,2.4"/><line x1="1747.5" y1="807.6" x2="1747.5" y2="972.6" stroke="#f0e020" stroke-width="2" stroke-dasharray="1.6,2.4"/><line x1="1293.3" y1="805.6" x2="1293.3" y2="972.6" stroke="#d02020" stroke-width="1.3"/><line x1="1219.6" y1="935.9" x2="1219.6" y2="972.6" stroke="#eeee70" stroke-width="1.6"/><line x1="1220.8" y1="953" x2="1220.8" y2="972.6" stroke="#eeee70" stroke-width="1.6"/><line x1="1226.9" y1="961.1" x2="1226.9" y2="972.6" stroke="#909090" stroke-width="1.6"/><line x1="1233" y1="940.3" x2="1233" y2="972.6" stroke="#8ed08e" stroke-width="1.6"/><line x1="1236.5" y1="910.7" x2="1236.5" y2="972.6" stroke="#eeee70" stroke-width="1.6"/><line x1="1250.2" y1="929.8" x2="1250.2" y2="972.6" stroke="#8ed08e" stroke-width="1.6"/><line x1="1254.3" y1="967.7" x2="1254.3" y2="972.6" stroke="#909090" stroke-width="1.6"/><line x1="1271" y1="927.3" x2="1271" y2="972.6" stroke="#eeee70" stroke-width="1.6"/><line x1="1272.2" y1="923.2" x2="1272.2" y2="972.6" stroke="#f0f0f0" stroke-width="1.6"/><line x1="1285" y1="950.6" x2="1285" y2="972.6" stroke="#8ed08e" stroke-width="1.6"/><line x1="1287.9" y1="920" x2="1287.9" y2="972.6" stroke="#eeee70" stroke-width="1.6"/><line x1="1289.1" y1="887.7" x2="1289.1" y2="972.6" stroke="#f0f0f0" stroke-width="1.6"/><line x1="1301.6" y1="945.7" x2="1301.6" y2="972.6" stroke="#8ed08e" stroke-width="1.6"/><line x1="1356.7" y1="943.2" x2="1356.7" y2="972.6" stroke="#eeee70" stroke-width="1.6"/><line x1="1357.7" y1="867.8" x2="1357.7" y2="972.6" stroke="#f0f0f0" stroke-width="1.6"/><line x1="1373.8" y1="909" x2="1373.8" y2="972.6" stroke="#eeee70" stroke-width="1.6"/><line x1="1374.8" y1="859.2" x2="1374.8" y2="972.6" stroke="#f0f0f0" stroke-width="1.6"/><line x1="1387.1" y1="870.3" x2="1387.1" y2="972.6" stroke="#8ed08e" stroke-width="1.6"/><line x1="1396.4" y1="964.8" x2="1396.4" y2="972.6" stroke="#909090" stroke-width="1.6"/><line x1="1408.1" y1="918.7" x2="1408.1" y2="972.6" stroke="#eeee70" stroke-width="1.6"/><line x1="1409.1" y1="865.4" x2="1409.1" y2="972.6" stroke="#f0f0f0" stroke-width="1.6"/><line x1="1421.2" y1="939.6" x2="1421.2" y2="972.6" stroke="#8ed08e" stroke-width="1.6"/><line x1="1424.9" y1="915.9" x2="1424.9" y2="972.6" stroke="#eeee70" stroke-width="1.6"/><line x1="1426.1" y1="870.3" x2="1426.1" y2="972.6" stroke="#f0f0f0" stroke-width="1.6"/><line x1="1438.4" y1="954.3" x2="1438.4" y2="972.6" stroke="#8ed08e" stroke-width="1.6"/><line x1="1494" y1="918" x2="1494" y2="972.6" stroke="#eeee70" stroke-width="1.6"/><line x1="1495.2" y1="814.7" x2="1495.2" y2="972.6" stroke="#f0f0f0" stroke-width="1.6"/><line x1="1507.4" y1="873.5" x2="1507.4" y2="972.6" stroke="#8ed08e" stroke-width="1.6"/><line x1="1511.1" y1="931" x2="1511.1" y2="972.6" stroke="#eeee70" stroke-width="1.6"/><line x1="1512.3" y1="812.3" x2="1512.3" y2="972.6" stroke="#f0f0f0" stroke-width="1.6"/><line x1="1524.6" y1="932.3" x2="1524.6" y2="972.6" stroke="#8ed08e" stroke-width="1.6"/><line x1="1545.4" y1="920.7" x2="1545.4" y2="972.6" stroke="#eeee70" stroke-width="1.6"/><line x1="1546.6" y1="806.9" x2="1546.6" y2="972.6" stroke="#f0f0f0" stroke-width="1.6"/><line x1="1558.4" y1="943.3" x2="1558.4" y2="972.6" stroke="#8ed08e" stroke-width="1.6"/><line x1="1562.5" y1="935.2" x2="1562.5" y2="972.6" stroke="#eeee70" stroke-width="1.6"/><line x1="1563.8" y1="821.6" x2="1563.8" y2="972.6" stroke="#f0f0f0" stroke-width="1.6"/><line x1="1575.5" y1="918.8" x2="1575.5" y2="972.6" stroke="#8ed08e" stroke-width="1.6"/><line x1="1598.8" y1="966.5" x2="1598.8" y2="972.6" stroke="#909090" stroke-width="1.6"/><line x1="1601.2" y1="966.5" x2="1601.2" y2="972.6" stroke="#909090" stroke-width="1.6"/><line x1="1632.1" y1="890.1" x2="1632.1" y2="972.6" stroke="#f0f0f0" stroke-width="1.6"/><line x1="1644.1" y1="942.8" x2="1644.1" y2="972.6" stroke="#8ed08e" stroke-width="1.6"/><line x1="1649.5" y1="835" x2="1649.5" y2="972.6" stroke="#f0f0f0" stroke-width="1.6"/><line x1="1683.5" y1="893.6" x2="1683.5" y2="972.6" stroke="#f0f0f0" stroke-width="1.6"/><line x1="1695.5" y1="942" x2="1695.5" y2="972.6" stroke="#8ed08e" stroke-width="1.6"/><line x1="1700.7" y1="814.2" x2="1700.7" y2="972.6" stroke="#f0f0f0" stroke-width="1.6"/><line x1="1712.9" y1="954.8" x2="1712.9" y2="972.6" stroke="#8ed08e" stroke-width="1.6"/><line x1="1723" y1="966" x2="1723" y2="972.6" stroke="#909090" stroke-width="1.6"/></svg>
<div class="t" style="left:1066.28px;top:796.42px;font-size:20.3px;line-height:20.3px;color:#fff;">1.0</div>
<div class="t" style="left:1066.28px;top:829.82px;font-size:20.3px;line-height:20.3px;color:#fff;">0.8</div>
<div class="t" style="left:1066.28px;top:863.22px;font-size:20.3px;line-height:20.3px;color:#fff;">0.6</div>
<div class="t" style="left:1066.28px;top:896.62px;font-size:20.3px;line-height:20.3px;color:#fff;">0.4</div>
<div class="t" style="left:1066.28px;top:930.02px;font-size:20.3px;line-height:20.3px;color:#fff;">0.2</div>
<div class="t" style="left:1066.28px;top:963.42px;font-size:20.3px;line-height:20.3px;color:#fff;">0.0</div>
<div class="t" style="left:981px;top:878px;width:120px;height:24px;font-size:20.5px;line-height:24px;color:#fff;text-align:center;transform:rotate(-90deg);transform-origin:50% 50%;">Magnitude</div>
<div class="r" style="left:0;top:0;width:1.5px;height:980px;background:repeating-linear-gradient(180deg,#000 0 2.5px,transparent 2.5px 4.6px)"></div>
</body></html>
